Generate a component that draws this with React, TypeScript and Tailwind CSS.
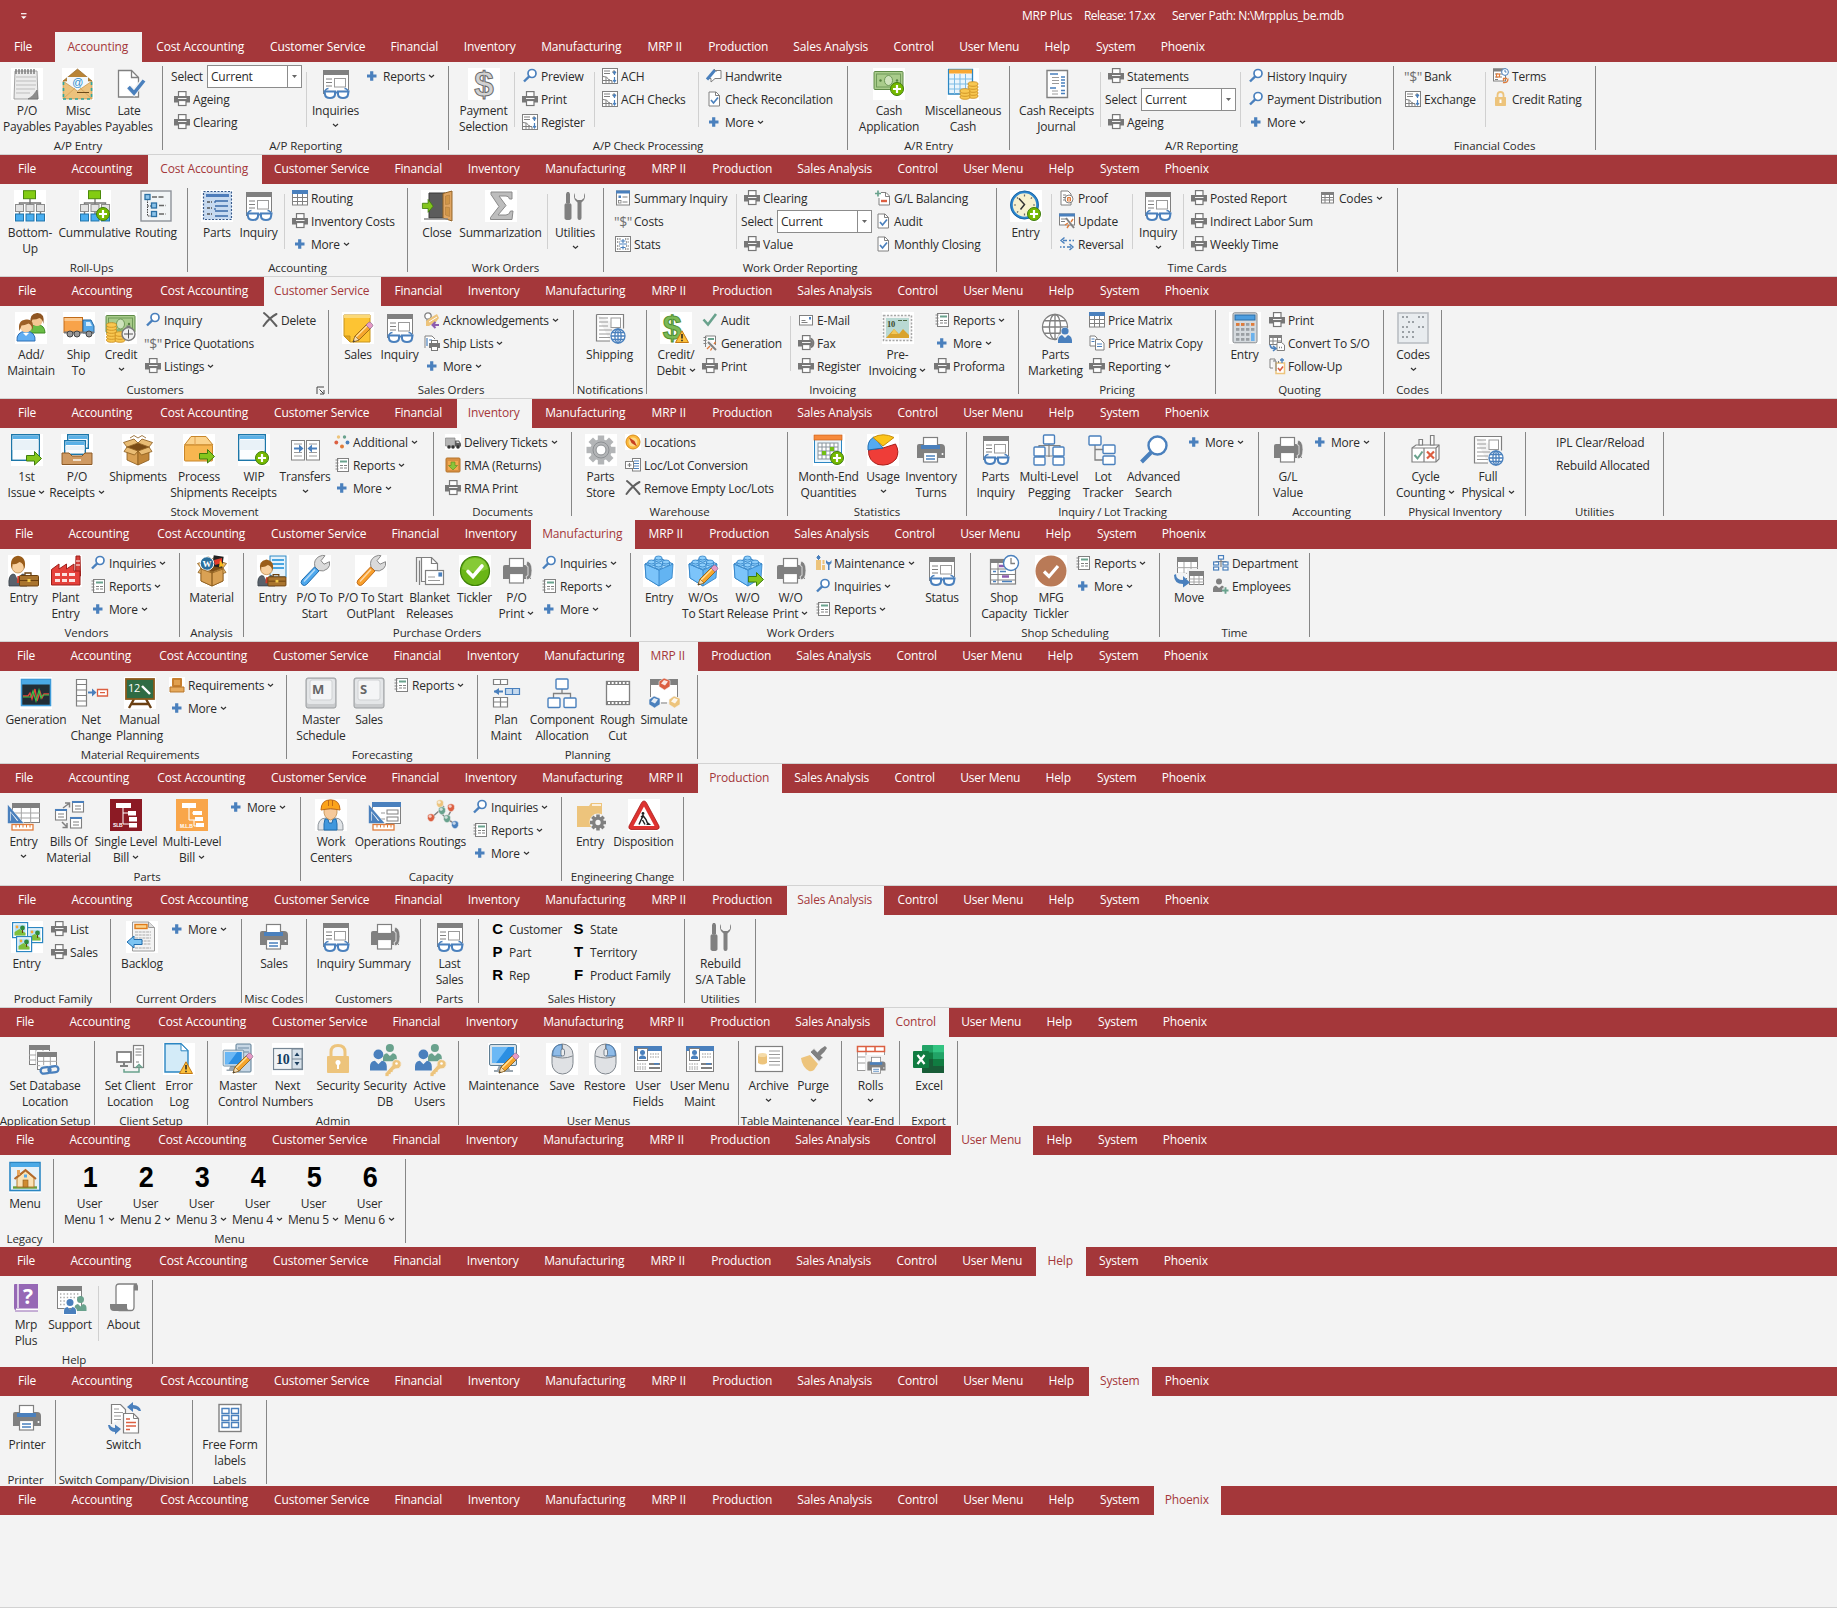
import React from "react";
import type { ReactNode } from "react";

/* ---------- palette used by the drawings ---------- */
const G = "#808080";
const B = "#4a80bd";
const GR = "#69a28d";
const Y = "#edc47c";
const O = "#e07b39";
const R = "#dc5f41";

/* ---------- shared icon parts ---------- */
const Bg = () => <rect width="32" height="32" fill="#fff" />;

const PlusBadge = ({ x, y, r = 7 }: { x: number; y: number; r?: number }) => (
  <g>
    <circle cx={x} cy={y} r={r - 0.5} fill="#76b900" stroke="#3f7d0c" />
    <path d={`M${x - 4} ${y}h8M${x} ${y - 4}v8`} stroke="#fff" strokeWidth="2.2" />
  </g>
);

const ArrowBadge = ({ x, y }: { x: number; y: number }) => (
  <path
    transform={`translate(${x} ${y})`}
    d="M.5 4.5h8v-4l7 7-7 6.500v-4h-8z"
    fill="#84c61c"
    stroke="#3f7d0c"
  />
);

const Pencil = ({ x, y, s = 1 }: { x: number; y: number; s?: number }) => (
  <g transform={`translate(${x} ${y}) scale(${s})`}>
    <path d="M0 20l2-6L14 2l4 4L6 18z" fill="#f6a52c" stroke="#8a5a12" strokeWidth=".8" />
    <path d="M3 15l12-12" stroke="#ffe3a0" strokeWidth="1.300" />
    <path d="M0 20l2-6 4 4z" fill="#f6dcb0" stroke="#7d5a20" strokeWidth=".6" />
    <path d="M0 20l.7-2 1.500 1.400z" fill="#333" />
    <path d="M13 3l2.500-2.500q1-.8 2.200.1l1.800 1.800q.8 1 0 2L17 7z" fill="#e59ac6" stroke="#8a6a8a" strokeWidth=".7" />
  </g>
);

const Warn = ({ x, y }: { x: number; y: number }) => (
  <g transform={`translate(${x} ${y})`}>
    <path d="M7 .8L13.500 12.500H.5z" fill="#fbbf3a" stroke="#c47a14" strokeLinejoin="round" />
    <path d="M7 4v4.500M7 9.800v1.500" stroke="#222" strokeWidth="1.500" />
  </g>
);

const Glasses = ({ x, y }: { x: number; y: number }) => (
  <g transform={`translate(${x} ${y})`} fill="none" stroke={B} strokeWidth="2">
    <path d="M2 5q-.5-4 3.500-4.500M25 5q.5-4-3.500-4.500" strokeWidth="1.600" />
    <path d="M1.500 3.500H12v3q-.5 3.500-5 3.500T2 6.500zM15 3.500h10.500l-.5 3q-.5 3.500-5 3.500t-5-3.500zM12 4.500h3" fill="#fff" />
  </g>
);

const Globe = ({ x, y, r, c = B }: { x: number; y: number; r: number; c?: string }) => (
  <g fill="none" stroke={c} strokeWidth="1.300">
    <circle cx={x} cy={y} r={r} fill="#fff" />
    <ellipse cx={x} cy={y} rx={r * 0.45} ry={r} />
    <path d={`M${x - r} ${y}h${2 * r}M${x - r * 0.87} ${y - r / 2}h${r * 1.74}M${x - r * 0.87} ${y + r / 2}h${r * 1.74}M${x} ${y - r}v${2 * r}`} />
  </g>
);

const Person = ({ x, y, c, s = 1 }: { x: number; y: number; c: string; s?: number }) => (
  <g transform={`translate(${x} ${y}) scale(${s})`} fill={c}>
    <circle cx="6" cy="3.500" r="3.500" />
    <path d="M0 15v-3q0-3.500 3.500-4L6 10.500 8.500 8q3.500.5 3.500 4v3z" />
  </g>
);

const Key = ({ x, y }: { x: number; y: number }) => (
  <g transform={`translate(${x} ${y})`} fill={Y} stroke="#f3f3f3" strokeWidth=".8">
    <path d="M0 14l7-8q-1-4 3-6 4-.5 6 2.500 1 4-2 6.500l-4 .5-2 1.500v2H6v2H4v2H0z" />
    <circle cx="11.500" cy="4" r="1.300" fill="#fff" stroke="none" />
  </g>
);

const Window = ({ x = 0, y = 0, w, h }: { x?: number; y?: number; w: number; h: number }) => (
  <g transform={`translate(${x} ${y})`}>
    <rect x=".7" y=".7" width={w - 1.4} height={h - 1.4} fill="#fbfdff" stroke="#1c76a8" strokeWidth="1.400" />
    <rect x="1.500" y="1.500" width={w - 3} height="3.500" fill="#5ab0e6" />
    <rect x="1.500" y="6" width={w - 3} height={(h - 7) / 2} fill="#e9f2f8" />
  </g>
);

const Carton = () => (
  <g stroke="#8a5a1c" strokeWidth=".8" strokeLinejoin="round">
    <path d="M5 13l11 4v14L5 26z" fill="#d9a154" />
    <path d="M27 13l-11 4v14l11-5z" fill="#c1873a" />
    <path d="M5 13l11-4 11 4-11 4z" fill="#7a4b16" />
    <path d="M5 13L1.500 8.500 12 5l4 4zM27 13l3.500-4.500L20 5l-4 4zM5 13l-3 4.500L12.500 21l3.500-4zM27 13l3 4.500L19.500 21 16 17z" fill="#e9bc74" />
    <path d="M8 4l4-2.500L16 4l4-2.500L24 4" fill="none" />
  </g>
);

const Lego = () => (
  <g stroke="#2d7fc4" strokeWidth=".8" strokeLinejoin="round">
    <path d="M2 9l14-6 14 6-1 14-13 8L3 23z" fill="#63b4f2" />
    <path d="M2 9l14 6v16L3 23z" fill="#7cc4fa" />
    <path d="M2 9l14-6 14 6-14 6z" fill="#a6dafd" />
    <g fill="#8ccdfb">
      <path d="M12 3v3q4 2.500 7 0V3z" /><ellipse cx="15.500" cy="3" rx="3.600" ry="2" />
      <path d="M5 7v3q4 2.500 7 0V7z" /><ellipse cx="8.500" cy="7" rx="3.600" ry="2" />
      <path d="M19.500 7v3q4 2.500 7 0V7z" /><ellipse cx="23" cy="7" rx="3.600" ry="2" />
      <path d="M12 10v3q4 2.500 7 0v-3z" /><ellipse cx="15.500" cy="10" rx="3.600" ry="2" />
    </g>
  </g>
);

const Org = () => (
  <g>
    <path d="M16 9v4M5.500 16v-3h21v3M16 13v4M5.500 21v4M16 21v4M26.500 21v4" stroke="#777" fill="none" strokeWidth="1.400" />
    <rect x="9.500" y=".7" width="12" height="8" fill="#83cc12" stroke="#4b8a0a" />
    <g fill="#e3e3e3" stroke="#8d8d8d">
      <rect x="1.500" y="14.500" width="8" height="7" /><rect x="12" y="14.500" width="8" height="7" /><rect x="22.500" y="14.500" width="8" height="7" />
    </g>
    <g fill="#49aef0" stroke="#2173a8">
      <rect x="1.500" y="24" width="8" height="7" /><rect x="12" y="24" width="8" height="7" /><rect x="22.500" y="24" width="8" height="7" />
    </g>
  </g>
);

const Businessman = () => (
  <g>
    <path d="M1 31q-1-11 4-12l5 2 5-2q5 1 4 12z" fill="#59616b" stroke="#353c44" strokeWidth=".8" />
    <path d="M7 19l3.500 7 3-7z" fill="#fff" /><path d="M9.500 21h2l.7 7h-3.400z" fill="#d23c2a" />
    <circle cx="10" cy="12" r="6" fill="#f7cf9e" stroke="#b5803c" strokeWidth=".7" />
    <path d="M3.500 14Q1 2 10 .7 19 2 16.500 14q-1-6-5-7-4 3-7 2z" fill="#9a5d1a" />
    <path d="M17 20v-2h6v2" fill="none" stroke="#6a3f0e" strokeWidth="1.300" />
    <rect x="11.500" y="20.500" width="19" height="10.500" rx="1" fill="#a9742e" stroke="#6a3f0e" />
    <path d="M12 25.500h18" stroke="#6a3f0e" /><rect x="19.500" y="24" width="3" height="3" fill="#f2c94c" />
  </g>
);

const Wrench = ({ c, d }: { c: string; d: string }) => (
  <g>
    <path d="M16 12q-2-7 4-10.500 4-1.800 6-.8l-4 5 3 3.500 5.500-2.500q1 4-2 7-4 3.500-9 1.800z" fill="#dadada" stroke="#8b8b8b" />
    <path d="M15.500 12l4.500 4L7.500 29.500q-2 2-4.300.2Q1 27.500 3 25z" fill={c} stroke={d} />
    <path d="M16 14.500L5 26.500" stroke="#fff" strokeOpacity=".6" strokeWidth="1.500" />
  </g>
);

const Monitor = () => (
  <g>
    <path d="M11 22h9l2 5h3v2H6v-2h3z" fill="#9aa6b0" />
    <rect x="1.500" y="1.500" width="27" height="21" rx="1.500" fill="#d6e2ea" stroke="#5d7d93" />
    <rect x="4" y="4" width="22" height="16" fill="#2b8fe3" />
    <path d="M4 4h16L8 20H4z" fill="#6bb8f5" />
  </g>
);

const Mouse = ({ right }: { right?: boolean }) => (
  <g>
    <rect x="6" y="1" width="21" height="30" rx="10.500" fill="#dfe1e4" stroke="#7f868d" />
    {right ? (
      <path d="M17 1.500q9.500 0 9.500 11.500h-9.500z" fill="#8ebbe8" stroke="#4b79a8" />
    ) : (
      <path d="M16 1.500Q6.500 1.500 6.500 13H16z" fill="#8ebbe8" stroke="#4b79a8" />
    )}
    <path d="M6.500 13q10 4 20 0M16.500 1v12" stroke="#7f868d" fill="none" />
    <rect x="15" y="6" width="3.500" height="7" rx="1.700" fill="#eceef0" stroke="#5d6a77" strokeWidth=".8" />
  </g>
);

const News = () => (
  <g>
    <path d="M2.500 2.500h27v14M16 29H2.500V2.500" fill="#fff" stroke={G} strokeWidth="1.200" />
    <path d="M5 6h9M5 10h9M5 14h9M5 18h13M5 22h11M5 25.500h11" stroke="#9a9a9a" />
    <rect x="17" y="6" width="9.500" height="9.500" fill="#fff" stroke="#9a9a9a" />
    <Globe x={24} y={24} r={7} />
  </g>
);

const GreySheet = ({ x, y, w, h, c = G }: { x: number; y: number; w: number; h: number; c?: string }) => (
  <g transform={`translate(${x} ${y})`}>
    <rect x=".5" y=".5" width={w - 1} height={h - 1} fill="#fff" stroke={c} />
    <rect width={w} height="5" fill={c} />
    <path
      d={`M${w / 3} 5v${h - 5}M${(w * 2) / 3} 5v${h - 5}M0 ${5 + (h - 5) / 3}h${w}M0 ${5 + ((h - 5) * 2) / 3}h${w}`}
      stroke="#a5a5a5"
    />
  </g>
);

const Key3D = ({ t }: { t: string }) => (
  <g>
    <rect x="1" y="1" width="30" height="30" rx="2" fill="#c9cbcd" stroke="#9a9da0" />
    <rect x="2" y="2" width="28" height="25" rx="2" fill="#e4e6e8" />
    <rect x="5" y="3" width="22" height="20" rx="2" fill="#f4f5f6" stroke="#d0d2d4" />
    <text x="7" y="17" fontSize="13" fontWeight="700" fontFamily="Open Sans, sans-serif" fill="#666">{t}</text>
  </g>
);

const Tools = () => (
  <g fill={G}>
    <path d="M8 2h2l1 2v9H7V4zM5.500 15q0-2 3.500-2t3.500 2v13q0 2-3.500 2t-3.500-2z" />
    <path d="M16 3q-2 3 0 7l2.500 2.500V28q0 2 2 2t2-2V12.500L25 10q2-4 0-7v5l-2.500 2h-4L16 8z" />
  </g>
);

const Printer32 = ({ phone }: { phone?: boolean }) => (
  <g>
    <path d="M2 12q0-2 2-2h22q4 0 4 4v10H2z" fill={G} />
    <rect x="8.500" y="3.500" width="14" height="9" fill="#fff" stroke={G} strokeWidth="1.200" />
    {!phone && <rect x="6" y="11" width="19" height="4" fill={B} />}
    {phone && <path d="M26 6q5 1 5 9.500T26 25l-1-3.500 2-1v-9l-2-1z" fill={G} stroke="#f3f3f3" strokeWidth=".8" />}
    <rect x="8.500" y="18.500" width="14" height="9.500" fill="#fff" stroke={G} strokeWidth="1.200" />
    {!phone && <path d="M11 22h9M11 25h9" stroke={B} strokeWidth="1.300" />}
    {!phone && <circle cx="27.500" cy="20" r="1" fill="#fff" />}
  </g>
);

const Profile = () => (
  <g>
    <rect x="2.500" y="3.500" width="27" height="25" fill="#fff" stroke={G} />
    <rect x="2" y="3" width="28" height="5" fill={B} />
    <rect x="5.500" y="5.500" width="10" height="12" fill="#fff" stroke={G} />
    <circle cx="10.500" cy="9.500" r="2.500" fill={B} /><path d="M7 16v-2q3.500-3.500 7 0v2z" fill={B} />
    <path d="M18 11h10M18 14h10M5 21h9M5 24h9M5 26h9" stroke="#999" strokeDasharray="1.500 1" />
    <rect x="17" y="20" width="11" height="2" fill={G} /><rect x="17" y="24" width="11" height="2" fill={G} /><rect x="22" y="20" width="5" height="1.500" fill={B} />
  </g>
);

const Gear = ({ x, y, r, c, hole }: { x: number; y: number; r: number; c: string; hole: string }) => (
  <g transform={`translate(${x} ${y})`}>
    {[0, 45, 90, 135].map((a) => (
      <rect key={a} x={-r * 0.22} y={-r} width={r * 0.44} height={2 * r} fill={c} transform={`rotate(${a})`} />
    ))}
    <circle r={r * 0.74} fill={c} />
    <circle r={r * 0.33} fill={hole} />
  </g>
);

const Ruler = ({ children }: { children?: ReactNode }) => (
  <g>
    {children}
    <path d="M0 8v17h15z" fill="#fff" stroke="#f3f3f3" strokeWidth="3" />
    <path d="M1 9v14h12zM4 17v4h3z" fill="#fff" stroke={B} strokeWidth="2.400" />
    <rect x="4" y="25.500" width="21" height="5.500" fill="#fff" stroke={O} strokeWidth="1.300" />
    <path d="M8 26v2.500M11.500 26v2.500M15 26v2.500M18.500 26v2.500M22 26v2.500" stroke={O} />
  </g>
);

const Form = () => (
  <g>
    <path d="M3.500 6v20M28.500 6v16" stroke={G} />
    <rect x="4" y="7" width="24" height="15" fill="#fff" />
    <rect x="3" y="2" width="26" height="5" fill={G} />
    <path d="M6 11h6M6 14.500h6M6 18h6" stroke={G} />
    <rect x="14.500" y="10.500" width="11" height="8.500" fill="#fff" stroke="#9a9a9a" />
  </g>
);

const Node = ({ x, y, w = 11, h = 9 }: { x: number; y: number; w?: number; h?: number }) => (
  <rect x={x} y={y} width={w} height={h} rx="1" fill="#fff" stroke={B} strokeWidth="1.400" />
);

const Dollar = ({ x, y, s, c, k, w = 1 }: { x: number; y: number; s: number; c: string; k: string; w?: number }) => (
  <text x={x} y={y} fontSize={s} textAnchor="middle" fontWeight="700" fontFamily="Liberation Sans, sans-serif" fill={c} stroke={k} strokeWidth={w}>$</text>
);

const Banknote = ({ w = 30, h = 18 }: { w?: number; h?: number }) => (
  <g>
    <rect x="1" y="3.500" width={w} height={h} rx="1" fill="#a9cc8b" stroke="#5e8a47" />
    <rect x="3.500" y="6" width={w - 5} height={h - 5} fill="none" stroke="#6f9a58" />
    <ellipse cx={w / 2 + 1} cy={3.5 + h / 2} rx="4" ry="5" fill="#cfe3bd" stroke="#6f9a58" />
    <circle cx="7.500" cy={3.5 + h / 2} r="1.200" fill="#55803f" /><circle cx={w - 5} cy={3.5 + h / 2} r="1.200" fill="#55803f" />
  </g>
);

const Coins = ({ x, y, n }: { x: number; y: number; n: number }) => (
  <g fill="#f8c750" stroke="#c98a1c" strokeWidth=".8">
    {Array.from({ length: n }, (_, i) => (
      <ellipse key={i} cx={x} cy={y - i * 3} rx="5" ry="2.300" />
    ))}
  </g>
);

/* ---------- 32 px icons ---------- */
const big: Record<string, ReactNode> = {
  notepad: (<><Bg /><path d="M4 3h22l1 28H3z" fill="#ececec" stroke="#a2a2a2" /><path d="M5 9h20M5 13h20M5 17h20M5 21h19M5 25h14" stroke="#bdbdbd" /><path d="M17 31q5-2 9-9l1 9z" fill="#8d8d8d" stroke="#666" strokeWidth=".6" /><path d="M5 1v5M8 1v5M11 1v5M14 1v5M17 1v5M20 1v5M23 1v5" stroke="#777" strokeWidth="1.400" /></>),
  envelope: (<><Bg /><path d="M1 13L15.500 1 30 13z" fill="#b98436" stroke="#8d5f1e" strokeWidth=".6" /><path d="M5 9h21v14H5z" fill="#f4f8fb" /><text x="15.500" y="18" fontSize="11" textAnchor="middle" fontFamily="Liberation Sans, sans-serif" fontStyle="italic" fill="#2b8ccc">@</text><path d="M1 13l14.500 10L30 13v18H1z" fill="#ecc27c" stroke="#b98436" strokeWidth=".6" /><path d="M1 31l12-11M30 31L18 20" stroke="#d9a860" /><path d="M15 24.500h12" stroke="#6a4a1a" /><path d="M1 31h29M1.500 14v17M29.500 14v17" stroke="#2fa7a0" strokeWidth="1.600" strokeDasharray="3 3" /></>),
  docCheck: (<><path d="M5.500 2.500h13l7 7v19.500h-20z" fill="#fff" stroke={G} strokeWidth="1.300" /><path d="M18.500 2.500v7h7" fill="none" stroke={G} strokeWidth="1.300" /><path d="M16 19l5 5.500L31 12" fill="none" stroke="#f3f3f3" strokeWidth="6" /><path d="M15.500 19l5.500 6L31 12.500" fill="none" stroke={B} strokeWidth="3.600" /></>),
  inquiry: (<><Form /><Glasses x={3} y={20} /></>),
  dollar: (<><Bg /><Dollar x={16} y={28} s={35} c="#d2d2d2" k="#6a6a6a" w={1} /></>),
  cashPlus: (<><Bg /><Banknote w={29} /><PlusBadge x={24} y={21} /></>),
  tableCoins: (<><Bg /><path d="M1.500 1.500h24v21l-4 3.500h-20z" fill="#eaf5fc" stroke="#2b86c2" strokeWidth="1.300" /><rect x="2" y="1.500" width="23" height="4" fill="#f9a833" /><path d="M2 11h23M2 16h23M2 21h21M7.500 6v20M13 6v20M18.500 6v20" stroke="#7cbbe4" /><Coins x={26} y={28} n={5} /><Coins x={18} y={29} n={3} /></>),
  journal: (<><path d="M6 2.500h20.500V29.500H6z" fill="#fff" stroke={G} strokeWidth="1.400" /><path d="M9 6h8M9 20h6" stroke={B} strokeWidth="1.300" /><path d="M11 9.500h7M11 12.500h7M11 15.500h7M11 23h6M11 26h6" stroke="#9a9a9a" /><path d="M20 9h4M20 12h4M20 15h4M20 18h4M20 22.500h4M20 25.500h4" stroke={B} strokeWidth="1.300" /></>),
  org: (<><Bg /><Org /></>),
  orgPlus: (<><Bg /><Org /><PlusBadge x={24} y={24} /></>),
  routing: (<><rect x="1" y="1" width="30" height="30" fill="#f1f4f6" stroke="#8d9299" strokeWidth="1.400" /><path d="M7.500 9v17H13M7.500 16H13" fill="none" stroke="#444" strokeDasharray="1.500 1" /><g fill="#8cc3ea" stroke="#2b70a4" strokeWidth="1.300"><rect x="5" y="4.500" width="5" height="5" /><rect x="11.500" y="13" width="5" height="5" /><rect x="11.500" y="21.500" width="5" height="5" /></g><path d="M12 7h12M19 15.500h7M19 24h7" stroke="#666" strokeWidth="1.300" strokeDasharray="5 1.500" /></>),
  parts: (<><Bg /><rect x="2.500" y="1.500" width="28" height="28" fill="#c7daf0" stroke="#35588a" strokeWidth="1.200" strokeDasharray="2 1.500" /><rect x="5" y="4" width="23" height="3" fill="#4d7cba" /><path d="M6 12h5M6 18h5M6 24h5" stroke="#555" strokeWidth="1.300" strokeDasharray="3 1" /><path d="M14 11h13M14 11v2M14 16h13M14 18v2M14 21h13M14 26h13" stroke="#3a6ba9" strokeWidth="1.300" /></>),
  door: (<><Bg /><path d="M8 3h16v25H8z" fill="#5c5c5c" stroke="#3a3a3a" /><path d="M22 3.500L31 1v30l-9-3z" fill="#dfa562" stroke="#8f6024" /><path d="M24.500 6l4-1v9l-4 .5zM24.500 17l4 .5v9l-4-1.500z" fill="#d09548" stroke="#b07c3a" strokeWidth=".6" /><path d="M3 29h24" stroke="#888" strokeWidth="1.500" /><g transform="translate(1 9) scale(.72 .95)"><ArrowBadge x={0} y={0} /></g></>),
  sigma: (<><Bg /><path d="M6 2h21v7h-2.500q-.5-3-3.500-3H14l7 9.500-8 9.500h8q3.500 0 4.500-4H28l-1 8.500H5.500v-2l8.500-11L6 4.500z" fill="#bdbdbd" stroke="#8a8a8a" /></>),
  tools: <Tools />,
  clockPlus: (<><Bg /><circle cx="14.500" cy="15" r="13" fill="#f7f1cf" stroke="#2b86cf" strokeWidth="2.600" /><circle cx="14.500" cy="15" r="14" fill="none" stroke="#1c5f99" strokeWidth=".8" /><path d="M14.500 4.500v2M14.500 23.500v2M4 15h2M23 15h2M7 7.500l1.200 1.200M22 7.500l-1.200 1.200M7 22.500l1.200-1.200" stroke="#666" strokeWidth="1.200" /><path d="M9 8.500l5.500 6-4 5" fill="none" stroke="#333" strokeWidth="1.500" /><PlusBadge x={24} y={24} /></>),
  people: (<><Bg /><path d="M14 21q0-8 8-8.500 8 .5 8 8.500z" fill="#69bd45" stroke="#3f8a22" /><circle cx="22" cy="8.500" r="5.500" fill="#f4c792" /><path d="M15.500 12Q14 1.500 22 1t6.500 11q-1-5-4-6-4 2-7 1.500z" fill="#8f5521" /><path d="M2 29q-1-9 9-10 10 1 9 10z" fill="#61aef2" stroke="#2d6fb5" /><circle cx="11" cy="14.500" r="6" fill="#f8cf9f" /><path d="M4.500 19Q2 8.500 11 7.500T17.500 19q0-6-4-7.500-4 2-7 2z" fill="#9c5f26" /><path d="M8 21l3 3 3-3z" fill="#fff" /></>),
  truck: (<><Bg /><rect x="1" y="5.500" width="18.500" height="15" fill="#f8a34a" stroke="#c06a18" /><path d="M1.500 6h17.500v3H1.500z" fill="#fbc88e" /><path d="M20 8h8l3 6v7H20z" fill="#58a9e8" stroke="#24679f" /><path d="M23 10h4l2 4h-6z" fill="#d6ecfb" /><rect x="1" y="19.500" width="30" height="2" fill="#777" /><circle cx="7" cy="22" r="3" fill="#9a9a9a" stroke="#444" /><circle cx="14" cy="22" r="3" fill="#9a9a9a" stroke="#444" /><circle cx="26" cy="22" r="3" fill="#9a9a9a" stroke="#444" /></>),
  credit: (<><Bg /><Banknote w={29} h={17} /><Coins x={6.5} y={28} n={6} /><Coins x={15} y={28} n={3} /><circle cx="23.500" cy="22" r="6.500" fill="#f1f1f1" stroke="#7a7a7a" strokeWidth="1.400" /><path d="M23.500 17.500v9M19 22h9" stroke="#555" /><path d="M21.500 14.500h4" stroke="#7a7a7a" strokeWidth="2" /></>),
  note: (<><Bg /><path d="M2 3h26v27H8l-6-6z" fill="#fdc433" stroke="#c8941a" /><path d="M2 3h26v3H2z" fill="#fbd978" /><path d="M8 30v-6H2z" fill="#e4a51d" stroke="#c8941a" /><Pencil x={11} y={10} /></>),
  news: <News />,
  dollarWarn: (<><Bg /><Dollar x={12} y={27} s={34} c="#7cb956" k="#4f8f30" w={1} /><Warn x={15} y={18} /></>),
  stamp: (<><Bg /><rect x="1.500" y="3.500" width="28" height="25" fill="#f4f4f4" stroke="#a7a7a7" strokeWidth="1.500" strokeDasharray="2 1.500" /><rect x="4" y="6" width="23" height="20" fill="#b9d9d3" /><path d="M4 26l8-9 5 5 4-5 6 6v3z" fill="#d9a32c" /><path d="M12 17l4 5h-7z" fill="#f2c85a" /><text x="5" y="14.500" fontSize="8.500" fontWeight="700" fontFamily="Liberation Serif, serif" fill="#3c4a2c">10</text><path d="M16 8.500h9" stroke="#4d6a45" strokeDasharray="4 1" /></>),
  globePerson: (<><Globe x={15} y={15} r={12.5} c={G} /><path d="M17 30q0-7 4-8.500 0-6 4-6.500 5 1 4 6.500 3 1.500 3 8.500z" fill="#f3f3f3" /><circle cx="25" cy="19" r="3.600" fill={B} /><path d="M18 31q-.5-7 4-8l3 3 3-3q4.500 1 4 8z" fill={B} /></>),
  calculator: (<><Bg /><rect x="4" y=".8" width="24" height="30" rx="1.500" fill="#d5dade" stroke="#85898d" /><rect x="6" y="3" width="20" height="5" fill="#4c9ddf" stroke="#2a6ca6" /><g fill="#9a9fa3">{[11, 16, 21, 26].map((y) => [7, 12, 17].map((x) => <rect key={`${x}-${y}`} x={x} y={y} width="3.400" height="2.800" />))}</g><rect x="12" y="11" width="3.400" height="2.800" fill={O} /><rect x="22" y="11" width="3.400" height="2.800" fill={O} /><rect x="7" y="11" width="3.400" height="2.800" fill={O} /><rect x="22" y="16" width="3.400" height="2.800" fill="#9a9fa3" /><rect x="22" y="21" width="3.600" height="8" fill="#6cb2ec" /></>),
  codes: (<><rect x="1" y="1" width="30" height="30" fill="#e8ecef" stroke="#b9bec3" strokeWidth="1.600" />{[[5, 4], [9, 4], [21, 4], [25, 4], [11, 9], [15, 9], [5, 14], [9, 14], [21, 14], [25, 14], [5, 19], [11, 19], [15, 19], [5, 24], [9, 24], [15, 24]].map(([x, y], i) => <rect key={i} x={x} y={y} width="2" height="2" fill="#9aa0a5" />)}</>),
  winArrow: (<><Bg /><Window w={29} h={27} /><ArrowBadge x={15} y={17} /></>),
  tray: (<><Bg /><Window x={6} y={0} w={22} h={15} /><Window x={3} y={6} w={22} h={15} /><path d="M1 19h7l3 3h10l3-3h7v11.500H1z" fill="#cf9a62" stroke="#8c5a26" /><path d="M12 26h8" stroke="#f0e0cc" strokeWidth="2" /></>),
  carton: (<><Bg /><Carton /></>),
  boxArrow: (<><Bg /><path d="M1.500 11L8 2.500h15l7 8.500z" fill="#fbd38c" stroke="#c8862a" /><rect x="1.500" y="11" width="28" height="16" rx="1" fill="#f7b650" stroke="#c8862a" /><path d="M12 3v8" stroke="#e0a050" /><ArrowBadge x={16} y={15} /></>),
  winPlus: (<><Bg /><Window w={28} h={27} /><PlusBadge x={24} y={24} /></>),
  transfers: (<g><rect x="2.500" y="6.500" width="13" height="19.500" fill="#fff" stroke={G} /><rect x="17.500" y="6.500" width="13" height="19.500" fill="#fff" stroke={G} /><path d="M5 10h8M20 10h8M5 18.500h8M20 18.500h8M5 22h8M20 22h8" stroke="#9a9a9a" /><path d="M5 14.500h8M28 14.500h-8" stroke={B} strokeWidth="1.800" /><path d="M10 10.500l4.500 4-4.500 4zM23 10.500l-4.500 4 4.500 4z" fill={B} /></g>),
  gear: (<><Bg /><Gear x={16} y={16} r={14.5} c="#b3b5b7" hole="#fff" /><circle cx="16" cy="16" r="8" fill="none" stroke="#8e9194" /><circle cx="16" cy="16" r="5" fill="none" stroke="#8e9194" /></>),
  calPlus: (<><Bg /><rect x="1.500" y="1.500" width="27" height="27" fill="#eaf5fc" stroke="#2b86c2" /><rect x="1" y="1" width="28" height="5" fill="#f78a3c" stroke="#c8601c" strokeWidth=".7" /><rect x="5" y="9" width="20" height="16" fill="#fff" stroke="#88939c" /><path d="M5 13h20M5 17h20M5 21h20M9 9v16M13 9v16M17 9v16M21 9v16" stroke="#88939c" /><rect x="17" y="13" width="4" height="4" fill="#72bf14" /><rect x="9" y="17" width="4" height="4" fill="#72bf14" /><PlusBadge x={24} y={24} /></>),
  pie: (<><Bg /><path d="M16 14L1.500 16Q1 27 11 30.500 22 33 29 25q4-7-.5-15z" fill="#ef3d38" stroke="#a81c17" /><path d="M16 14L1 16V12Q1.500 6 7 3z" fill="#55aaf0" stroke="#1f6cae" /><path d="M16 12L6 3.500Q16-2 27 3.500z" fill="#fcc419" stroke="#c78d0a" /></>),
  printer: <Printer32 />,
  printerPhone: <Printer32 phone />,
  multi: (<><path d="M16 10v13M6 13v-1.500h21V13M6 24v-2h21v2" fill="none" stroke={G} strokeWidth="1.200" /><Node x={10.500} y={1} /><Node x={1} y={13} /><Node x={20} y={13} /><Node x={1} y={23} h={8} /><Node x={20} y={23} h={8} /></>),
  lot: (<><path d="M8 11v15h8M8 15.500h8" fill="none" stroke={G} strokeWidth="1.300" /><Node x={2} y={2} w={12} /><Node x={16} y={11} w={12} h={8.5} /><Node x={16} y={22} w={12} h={8.5} /></>),
  search: (<><circle cx="19.500" cy="11.500" r="9" fill="#fff" stroke={B} strokeWidth="2.400" /><path d="M13 18.500L3.500 28" stroke={B} strokeWidth="4" /></>),
  cycle: (<g fill="#fff" stroke={G} strokeWidth="1.200"><path d="M2 14l4-3h23v14l-3 3H2z" /><path d="M2 14h24v14M14 14v14M26 14l3-3" fill="none" /><path d="M9 11V5.500h3.500V11zM20.500 11V1.500H24V11z" /><path d="M4.500 21l3 3.500 5-7" fill="none" stroke={GR} strokeWidth="2" /><path d="M17 17.500l7 7M24 17.500l-7 7" stroke={R} strokeWidth="2.200" /></g>),
  biz: (<><Bg /><Businessman /></>),
  factory: (<><Bg /><path d="M26 1h4l.5 20h-5z" fill="#d8403a" stroke="#9c1f1a" /><path d="M1.500 30V14.500L9 9v5l7.500-5v5L24 9v7h6v14z" fill="#e5413b" stroke="#9c1f1a" /><g fill="#fbe3e1"><rect x="5" y="18" width="5" height="3" /><rect x="12" y="18" width="5" height="3" /><rect x="19" y="18" width="6" height="3" /><rect x="5" y="24" width="5" height="3" /><rect x="12" y="24" width="5" height="3" /><rect x="19" y="24" width="6" height="3" /></g><path d="M26 6h4M26 10h4" stroke="#fff" /></>),
  material: (<><Bg /><Carton /><rect x="17" y="1" width="10" height="11" fill="#222" transform="rotate(8 22 6)" /><path d="M18 5l8-2v5l-7 2z" fill="#e33b2c" /><path d="M24 5l4 6-5 1z" fill="#fbbc1c" /><circle cx="11" cy="8.500" r="6.800" fill="#2a6f9c" stroke="#fff" /><text x="11" y="12" fontSize="9" fontWeight="700" textAnchor="middle" fontFamily="Liberation Serif, serif" fill="#fff">W</text><path d="M5 14l11 4v13L5 26zM27 14l-11 4v13l11-5z" fill="#d9a154" stroke="#8a5a1c" strokeWidth=".8" /></>),
  bizDoc: (<><Bg /><rect x="13" y="1" width="16" height="21" fill="#e6f3fb" stroke="#2b86c2" /><path d="M15 5h12M15 9h12M15 13h12" stroke="#49a6e2" strokeWidth="2" /><g transform="translate(0 4) scale(.95 .87)"><Businessman /></g></>),
  wrenchBlue: (<><Bg /><Wrench c="#4fa9ee" d="#1f6cae" /></>),
  wrenchOrange: (<><Bg /><Wrench c="#f9a02c" d="#c06a18" /></>),
  blanket: (<g fill="#fff" stroke={G} strokeWidth="1.200"><path d="M2.500 27V2.500H14M5.500 30V5.500" fill="none" /><path d="M8.500 28.500v-24h10l6 6v18z" transform="translate(-1 -2)" /><path d="M17.500 2.500v6h6" fill="none" /><rect x="11.500" y="15.500" width="18" height="14" /><path d="M14 22h7M14 25.500h12" stroke="#9a9a9a" /><rect x="25" y="18" width="2.500" height="3" fill={B} stroke={B} /></g>),
  tickler: (<><Bg /><circle cx="16" cy="16" r="14.500" fill="#6ab616" stroke="#3e8008" strokeWidth="1.200" /><path d="M3 14q2-11 13-11t13 11q-13 6-26 0z" fill="#9ad74c" opacity=".6" /><path d="M9 16.500l5 5L23 11" fill="none" stroke="#fff" strokeWidth="3.600" strokeLinecap="round" /></>),
  mfg: (<><Bg /><circle cx="16" cy="16" r="15.500" fill="#b97a57" /><path d="M9 16.500l5 5L23 11" fill="none" stroke="#fff" strokeWidth="3.200" /></>),
  lego: (<><Bg /><Lego /></>),
  legoPencil: (<><Bg /><Lego /><Pencil x={11} y={10} /></>),
  legoArrow: (<><Bg /><Lego /><ArrowBadge x={16} y={17} /></>),
  capacity: (<g><rect x="2.500" y="4.500" width="25" height="24.500" fill="#fff" stroke={G} strokeWidth="1.200" /><rect x="2" y="4" width="20" height="4" fill={G} /><path d="M10 8v21M3 14h24M3 19.500h24M3 25h24" stroke={G} /><path d="M11 11h7M14 21.500h7" stroke="#8d5cb0" strokeWidth="2.600" /><path d="M12 16.500h6M5 16.500h3M14 26.500h10M5 26.500h3" stroke={B} strokeWidth="1.500" /><circle cx="23" cy="8" r="7.500" fill="#fff" stroke={B} strokeWidth="1.400" /><path d="M23 3v5.500h4" fill="none" stroke={G} strokeWidth="1.300" /></g>),
  move: (<><GreySheet x={4} y={2} w={21} h={22} /><rect x="14" y="14" width="18" height="18" fill="#f3f3f3" /><GreySheet x={16} y={16} w={15} h={14} /><path d="M13 18v14H0V18z" fill="#f3f3f3" /><path d="M3 19q0 6 7 6v-4l7 6.500-7 5v-3.500Q1 29 1 20z" fill={B} /></>),
  generation: (<><Bg /><rect x="1.500" y="2.500" width="29" height="26" fill="#222e36" stroke="#3f9bd8" strokeWidth="1.600" /><rect x="2" y="3" width="28" height="4.500" fill="#4aa9e6" /><path d="M3 19h5l2-3 2 6 3-10 2 12 3-9 2 6 2-4h5" fill="none" stroke="#e0443a" strokeWidth="1.400" /><path d="M3 20h8l2-6 3 10 3-11 2 8 2-3h6" fill="none" stroke="#38c24a" strokeWidth="1.200" /></>),
  netChange: (<g><path d="M1.500 2.500h10V29h-10zM1.500 7.500h10M1.500 13h10M1.500 18.500h10M1.500 24h10" fill="#fff" stroke={G} strokeWidth="1.200" /><path d="M13 15.500h6" stroke={B} strokeWidth="2" /><path d="M17 11.500l4.500 4-4.500 4z" fill={B} /><path d="M22.500 12.500h10v6.500h-10zM25 15.700h5" fill="#fff" stroke={R} strokeWidth="1.300" /></g>),
  board: (<><Bg /><path d="M10 22L5 31M22 22l5 9M7 27h18" stroke="#6b3f12" strokeWidth="2.400" /><rect x="2" y="2" width="28" height="20" fill="#2f6b44" stroke="#8a5a1c" strokeWidth="1.800" /><text x="4" y="15" fontSize="11" fontFamily="Open Sans, sans-serif" fill="#fff">12</text><path d="M18 9l8 8" stroke="#fff" strokeWidth="2.400" /></>),
  keyM: <Key3D t="M" />,
  keyS: <Key3D t="S" />,
  plan: (<g fill="#fff" stroke={G} strokeWidth="1.200"><path d="M3.500 2.500h14v5h-14zM10.500 2.500v5" /><path d="M15.500 11.500h14v6h-14zM22.500 11.500v6" fill="#c5d9ee" stroke={B} /><path d="M4 14.500h9" stroke={B} strokeWidth="2" /><path d="M9 11l-5 3.500L9 18z" fill={B} stroke="none" /><path d="M3.500 20.500h14v9.500h-14zM10.500 20.500V30M3.500 25h14" /></g>),
  component: (<><path d="M16 12v5M7.500 21v-4.500h17V21" fill="none" stroke={G} strokeWidth="1.300" /><Node x={10} y={2} w={12} h={10} /><Node x={2} y={21} w={12} h={9.5} /><Node x={18} y={21} w={12} h={9.5} /></>),
  film: (<g><rect x="4.500" y="4.500" width="23" height="23" fill="#fff" stroke={G} strokeWidth="1.300" /><path d="M4 6h24M4 26h24" stroke={G} strokeWidth="4" /><path d="M6 6h21M6 26h21" stroke="#fff" strokeWidth="2" strokeDasharray="2 1.700" /></g>),
  simulate: (<g><rect x="2" y="2" width="28" height="7" fill={G} /><path d="M2.500 8v12M29.500 8v12M13 26h6" stroke={G} /><rect x="3" y="8" width="26" height="17" fill="#fff" />{([[10, 0, R], [0, 18, B], [20, 18, Y]] as [number, number, string][]).map(([x, y, c]) => <g key={c} transform={`translate(${x} ${y})`}><path d="M6 1l6 2.500v6L6.500 13 1 9.500v-5z" fill={c} stroke="#f3f3f3" strokeWidth=".6" /><path d="M3 6.500L6 3l4 1.500-3 4z" fill="#fff" opacity=".85" /></g>)}</g>),
  partEntry: (<Ruler><GreySheet x={4} y={4} w={28} h={20} /></Ruler>),
  bom: (<g fill="#fff" stroke={G} strokeWidth="1.100">{[[19, 2], [2, 10], [17, 18]].map(([x, y]) => <g key={x}><rect x={x + .5} y={y + .5} width="11" height="10.500" /><path d={`M${x} ${y + 1}h12`} stroke={B} strokeWidth="2" /><path d={`M${x + 3} ${y + 5}h6M${x + 3} ${y + 8}h6`} /></g>)}<path d="M10 9l6-4.500M12 4h4.500v4.500M9 23l5 5M9.500 28.500H14V24" fill="none" strokeWidth="1.500" /></g>),
  slb: (<><rect width="32" height="32" fill="#8c1a24" /><rect x="6" y="4" width="15" height="5" fill="#fff" /><path d="M13 9v16h7M13 14h5" fill="none" stroke="#fff" /><g fill="#fff"><rect x="18" y="12" width="8" height="4.500" /><rect x="19" y="18" width="8" height="4.500" /><rect x="19" y="24" width="8" height="4.500" /></g><text x="3" y="28" fontSize="5" fontWeight="700" fontFamily="Liberation Sans, sans-serif" fill="#fff">SLB</text></>),
  mlb: (<><rect width="32" height="32" fill="#f9a64a" /><rect x="6" y="4" width="14" height="5" fill="#fff" /><path d="M13 9v12h6M16 14h4M18 21v6h4" fill="none" stroke="#fff" /><g fill="#fff"><rect x="17" y="12" width="9" height="4" /><rect x="19" y="18" width="8" height="4" /><rect x="20" y="24" width="8" height="4" /></g><text x="4" y="29" fontSize="5" fontWeight="700" fontFamily="Liberation Sans, sans-serif" fill="#fff">M.L.B</text></>),
  worker: (<><Bg /><path d="M3 31q-1-12 8-12h9q9 0 8 12z" fill="#e2e5e8" stroke="#8f969c" /><path d="M9 31v-6l1-5h3l1 4h3l1-4h3l1 5v6z" fill="#3f97dd" stroke="#1f6cae" /><path d="M9 10q-1 9 6.500 11 7.500-2 6.500-11z" fill="#f6c99a" stroke="#b5803c" strokeWidth=".7" /><path d="M6 11Q6 1 15.500.8 25 1 25 11q-9.500-3-19 0z" fill="#fba31b" stroke="#c06a18" /><path d="M13.500 1v6M17.500 1v6" stroke="#c06a18" /></>),
  operations: (<Ruler><rect x="3.500" y="3.500" width="28" height="21" fill="#fff" stroke={G} /><rect x="3" y="3" width="29" height="5" fill={B} /><path d="M12 14h4M12 20h4" stroke="#999" /><rect x="18" y="11" width="11" height="4" fill="#fff" stroke={G} /><rect x="18" y="18" width="11" height="4" fill="#fff" stroke={G} /></Ruler>),
  routings: (<g><path d="M3 20l9-8 8 8 8 5M12 12l5-5M20 19l5-9M8 18l-5 2" stroke={G} strokeWidth="1.500" fill="none" /><g stroke="#f3f3f3" strokeWidth=".6">{([[13, 5, Y], [24, 9, R], [4, 19, R], [15, 12, GR], [20, 20, GR], [28, 26, B]] as [number, number, string][]).map(([x, y, c], i) => <g key={i} transform={`translate(${x} ${y}) scale(.85)`}><path d="M-4-2q0-3 4-3t4 3v3q-1 3-4 3.500-3-.5-4-3.500z" fill={c} /><circle cx="-1" cy="-2" r="1.600" fill="#fff" opacity=".7" /></g>)}</g></g>),
  folderGear: (<><path d="M3 7h12l2-3h11v24H3z" fill={Y} /><path d="M18 6h9" stroke="#fff" strokeWidth="1.500" /><circle cx="24" cy="23" r="8.500" fill="#f3f3f3" /><Gear x={24} y={23.500} r={8} c={G} hole="#f3f3f3" /></>),
  roadwork: (<><Bg /><path d="M16 2q1.500 0 2.300 1.500L31 27q1 3-2 3.500H3q-3-.5-2-3.500L13.700 3.500Q14.500 2 16 2z" fill="#dd3330" stroke="#a81c1a" strokeWidth=".8" /><path d="M16 7.500l10.500 19.500H5.500z" fill="#fff" /><circle cx="15" cy="14.500" r="1.400" fill="#222" /><path d="M13 18l2-1.500 3 4 2 5M15 17l-2 4-2 4.500M14.500 21l2.500 4.500" fill="none" stroke="#222" strokeWidth="1.500" /><path d="M18 26l2.500-2.500L23 26z" fill="#222" /></>),
  pictures: (<><Bg />{[[1, 1], [16, 6], [5, 15]].map(([x, y]) => <g key={x} transform={`translate(${x} ${y})`}><rect x=".6" y=".6" width="15" height="15" fill="#fff" stroke="#2b86c2" strokeWidth="1.200" /><rect x="2.500" y="2.500" width="11" height="11" fill="#b6dff6" /><path d="M2.500 10l5-3 6 4v2.500h-11z" fill="#7fbf3a" /><circle cx="5" cy="5" r="1.400" fill="#f9a833" /><circle cx="10.500" cy="6" r="2.400" fill="#2f8a3a" /><path d="M10.500 8v3" stroke="#6b3f12" /></g>)}</>),
  backlog: (<><Bg /><path d="M6.500 1h16l6 5.500V30h-22z" fill="#f4f4f4" stroke="#9a9a9a" /><path d="M22.500 1v5.500h6" fill="#ddd" stroke="#9a9a9a" /><rect x="9" y="3.500" width="12" height="4" fill="#fbd38c" stroke="#e07b1a" strokeWidth="1.400" /><path d="M9 11h16M9 14h16M9 17h16M14 20h11M14 23h11M9 27h16" stroke="#a9a9a9" strokeDasharray="3 .7" /><path d="M1 21l7-6v3.500h8v5H8V27z" fill="#7cc4f2" stroke="#1f6cae" /></>),
  setDb: (<g><GreySheet x={0} y={2} w={21} h={20} /><rect x="7" y="8" width="24" height="23" fill="#f3f3f3" /><GreySheet x={8} y={9} w={20} h={18} /><rect x="11" y="22" width="21" height="10" fill="#f3f3f3" /><g fill="none" stroke={B} strokeWidth="2.300"><rect x="11.500" y="24.500" width="10" height="6" rx="3" transform="rotate(-8 16 27)" /><rect x="19.500" y="23.500" width="10" height="6" rx="3" transform="rotate(-8 24 27)" /></g></g>),
  setClient: (<g><rect x="3" y="9" width="14" height="10" fill="#fff" stroke={G} strokeWidth="1.800" /><path d="M10 19v3M6 23h8" stroke={G} strokeWidth="2" /><rect x="19.500" y="2.500" width="10" height="22" fill="#fff" stroke={G} strokeWidth="1.200" /><path d="M21.500 6h6M21.500 9h6M21.500 12h6M22 19h3" stroke={G} /><path d="M10 26v3h15v-6" fill="none" stroke={GR} strokeWidth="1.500" /><path d="M21.500 25l3.500-3.500 3.500 3.500" fill="none" stroke={GR} strokeWidth="1.500" /></g>),
  errorLog: (<><Bg /><path d="M2 .8h16l7 7V29H2z" fill="#d3ebf8" stroke="#2b86c2" strokeWidth="1.400" /><path d="M18 .8v7h7z" fill="#fff" stroke="#2b86c2" /><Warn x={16} y={18} /></>),
  master: (<><Bg /><rect x="14" y="1" width="15" height="28" rx="1" fill="#c6d6e4" stroke="#5d7d93" /><path d="M16 5h11M16 9h11" stroke="#8aa4b9" strokeWidth="1.500" /><g transform="translate(0 6) scale(.76)"><Monitor /></g><Pencil x={11} y={10} /></>),
  numbers: (<><Bg /><rect x="1.500" y="5.500" width="29" height="21" fill="#f1f4f6" stroke="#768694" strokeWidth="1.200" /><rect x="20" y="6" width="10" height="20" fill="#d7e1ea" stroke="#768694" /><path d="M20 16h10" stroke="#768694" /><path d="M22.500 13l2.500-3.500 2.500 3.500zM22.500 19l2.500 3.500 2.500-3.500z" fill="#1c3e5e" /><text x="10.700" y="21" fontSize="14" fontWeight="700" textAnchor="middle" fontFamily="Liberation Serif, serif" fill="#123c5f">10</text></>),
  lock: (<><path d="M9 14V9q0-6.500 7-6.500T23 9v5" fill="none" stroke={Y} strokeWidth="3" /><rect x="5" y="13" width="22" height="17" rx="1" fill={Y} /><circle cx="16" cy="19.500" r="2.500" fill="#fff" /><path d="M16 20v6" stroke="#fff" strokeWidth="2" /></>),
  secDb: (<><Person x={14} y={1} c={GR} s={1.15} /><Person x={0} y={6} c="#f3f3f3" s={1.5} /><Person x={1} y={6.500} c={B} s={1.400} /><Key x={16} y={16.500} /></>),
  maint: (<><Bg /><Monitor /><Pencil x={11} y={10} /></>),
  mouseL: (<><Bg /><Mouse /></>),
  mouseR: (<><Bg /><Mouse right /></>),
  profile: <Profile />,
  archive: (<g><rect x="2.500" y="3.500" width="27" height="25" fill="#fff" stroke={G} strokeWidth="1.200" /><path d="M5 12v8q4.500 3 9 0v-8z" fill={Y} /><ellipse cx="9.500" cy="12" rx="4.500" ry="2" fill="#f5dba8" /><path d="M16 8h11M16 11.500h11M16 15h11M16 18.500h11M16 22h11" stroke="#9a9a9a" /></g>),
  purge: (<g><path d="M4 15l9-3 8 9-4 6q-3 2-5 1-7-4-8-13z" fill={Y} /><path d="M13 9l4-3.500 9 9-4 4z" fill={G} stroke="#f3f3f3" /><path d="M20 10q4-5 8-7l2 2q-2 4-7 8z" fill={G} /></g>),
  rolls: (<g><rect x="2.500" y="3.500" width="27" height="24" fill="#fff" stroke="#9a9a9a" /><path d="M2.500 3.500h27v5h-27zM11 3.500v5M20 3.500v5" fill="#fff" stroke={R} strokeWidth="1.500" /><path d="M2 14h9M2 20h9M11 9v18" stroke="#9a9a9a" /><g transform="translate(11 12) scale(.65)"><rect x="-1" y="0" width="34" height="32" fill="#f3f3f3" /><Printer32 /></g></g>),
  excel: (<g><rect x="9" y="2" width="22" height="28" rx="1" fill="#21a366" /><path d="M20 2h10q1 0 1 1v6.500H20z" fill="#33c481" /><path d="M9 9.500h11V16H9z" fill="#107c41" /><path d="M20 9.500h11V16H20z" fill="#21a366" /><path d="M9 16h22v14H10q-1 0-1-1z" fill="#185c37" /><path d="M20 16h11v7H20z" fill="#107c41" /><rect y="8" width="16" height="17" rx="1" fill="#107c41" /><path d="M4.500 12l7 9M11.500 12l-7 9" stroke="#fff" strokeWidth="2.200" /></g>),
  home: (<><Bg /><rect x="1" y="1.500" width="30" height="28" fill="#e6f1f8" stroke="#2b86c2" strokeWidth="1.600" /><rect x="2" y="2" width="28" height="4" fill="#4aa9e6" /><path d="M4 26.500h24" stroke="#6aa03a" strokeWidth="2.400" /><path d="M8 17v9h17v-9l-8.500-7z" fill="#fbe2b4" stroke="#b57a2c" /><path d="M5.500 18L16.500 9 27 18" fill="none" stroke="#b36a2a" strokeWidth="2" /><rect x="8" y="9" width="3" height="5" fill="#e8a55a" /><rect x="14" y="19" width="5" height="7" fill="#cf8a30" stroke="#8a5a1c" strokeWidth=".6" /><rect x="15" y="13.500" width="3" height="3" fill="#58a9e8" /></>),
  book: (<><path d="M4 3q0-1 1-1h23v26H6q-2 0-2-2z" fill="#9668b5" /><path d="M8 2v24" stroke="#fff" strokeWidth="1.300" /><path d="M6 26.500h22v2H6z" fill="#fff" /><path d="M5 29h23" stroke="#9668b5" /><text x="18" y="22" fontSize="21" fontWeight="700" textAnchor="middle" fontFamily="Open Sans, sans-serif" fill="#fff">?</text></>),
  support: (<g><rect x="3.500" y="4.500" width="24" height="22" fill="#fff" stroke={G} /><rect x="3" y="4" width="25" height="5" fill={G} /><path d="M6 12h19M6 15.500h19M6 19h8M6 22.500h5" stroke="#aaa" strokeWidth="1.400" strokeDasharray="1.400 2" /><Person x={20.5} y={14} c={GR} s={1} /><Person x={9.5} y={16} c="#fff" s={1.13} /><Person x={10} y={17} c={B} s={1} /></g>),
  scroll: (<g><path d="M8 22V5q0-3 3-3h18q-3 0-3 3v20q0 3.500-3 3.500H11z" fill="#fff" stroke={G} strokeWidth="1.300" /><path d="M26 2h2q2 0 2 3v3.500h-4zM2 22h17v3q0 3 3 4H6q-4 0-4-4z" fill={G} /></g>),
  switch: (<g><path d="M3.500 22V2.500h9l5 5V14" fill="#fff" stroke={G} strokeWidth="1.200" /><path d="M6 7h5M6 10.500h9M6 14h7M6 17.500h7" stroke="#9a9a9a" /><path d="M15.500 11.500h10l5 5V31h-15z" fill="#fff" stroke={G} strokeWidth="1.200" /><path d="M25.500 11.500v5h5" fill="none" stroke={G} /><path d="M18 17h4M18 20.500h10M18 24h10M18 27.500h4" stroke={R} strokeWidth="1.300" /><path d="M19 5l6-5v3q7 .5 8 6h-2q-2-2.500-6-2.500V10zM13 27l-6-4.500V26q-4-.5-5-3H0q1 7 7 7v2.500z" fill={B} /></g>),
  labels: (<g fill="#fff" strokeWidth="1.400"><rect x="5" y="2.500" width="22" height="27" stroke={G} />{[7, 14, 21].map((y) => <path key={y} d={`M8 ${y - 0.5}h7v5H8zM17.500 ${y - 0.5}h7v5h-7z`} stroke={B} />)}</g>),
};

/* ---------- 16 px icons ---------- */
const Glass16 = () => (
  <g><circle cx="10" cy="5.500" r="4" fill="#fff" stroke={B} strokeWidth="1.700" /><path d="M7.200 8.300L2 13.500" stroke={B} strokeWidth="2.400" /></g>
);
const Print16 = () => (
  <g><path d="M0 5h16v6.500H0z" fill="#777" /><rect x="4.500" y=".6" width="7.500" height="5" fill="#fff" stroke="#777" strokeWidth="1.200" /><path d="M4 7.500h8.500" stroke="#f3f3f3" /><rect x="4.500" y="9.500" width="7.500" height="5" fill="#fff" stroke="#777" strokeWidth="1.200" /></g>
);
const Report16 = () => (
  <g><rect x="3.500" y="1.500" width="11" height="13" fill="#fff" stroke={G} /><path d="M1.500 3h3M1.500 6h3M1.500 9h3M1.500 12h3" stroke={G} /><rect x="6" y="3.500" width="7" height="2" fill={GR} /><path d="M6 8.500h3M10 8.500h3M6 11h3M10 11h3" stroke={G} /></g>
);
const DocCheck16 = () => (
  <g><path d="M3 1h7l3.500 3.500V15H3z" fill="#fff" stroke={G} /><path d="M9.500 1v3.500h4" fill="none" stroke={G} /><path d="M5 9l2.500 3L12 6.500" fill="none" stroke={B} strokeWidth="1.700" /></g>
);
const X16 = () => (
  <path d="M2 1q5 4 12.500 13M14.500 2Q7 6 1.500 14" fill="none" stroke="#5f5f5f" strokeWidth="2" strokeLinecap="round" />
);

const small: Record<string, ReactNode> = {
  none: null,
  plus: <path d="M3 8h9.500M7.700 3.200v9.500" stroke={B} strokeWidth="3.200" />,
  print: <Print16 />,
  search: <Glass16 />,
  register: (<g><rect x=".5" y=".5" width="15" height="15" fill="#fff" stroke={G} /><path d="M2 3h6M2 5.500h6M10 4h4M12 2v4" stroke={G} /><path d="M1 8.500q4 0 5 2t4 2.500v2.500M4 9v6.500M7 11v4.500M1 12.500h9" stroke={G} fill="none" /><path d="M12.500 3v4M12.500 9v5M11 5l1.500-1.500L14 5M11 12l1.500 2 1.500-2" stroke={B} fill="none" strokeWidth="1.200" /></g>),
  handwrite: (<g><path d="M8 2.500h7v8H9L5 14v-3.500H3" fill="#fff" stroke={G} /><path d="M1 11.500L9 2" stroke={B} strokeWidth="3" /><path d="M8 1l2.500 2.500" stroke={G} /></g>),
  docCheck: <DocCheck16 />,
  dollarQ: (<text x="8" y="13.500" fontSize="14" textAnchor="middle" fontFamily="Open Sans, sans-serif" letterSpacing="-.3" fill="#6f6f6f">"$"</text>),
  terms: (<g><rect x=".5" y="1" width="12" height="12" fill="#fff" stroke={G} /><rect y=".5" width="13" height="3" fill={G} /><path d="M2 6h3M7 6h2M2 9h3M7 9h2M2 11.500h3" stroke={G} /><rect x="3.500" y="6" width="3" height="3" fill="#fff" stroke={O} strokeWidth="1.200" /><circle cx="12" cy="4" r="3.400" fill="#fff" stroke={B} /><path d="M12 2v2h1.500" stroke={B} fill="none" /><path d="M10 14.500q5 1 5-4M10 10.500h4M10.500 10v3" stroke={O} strokeWidth="1.300" fill="none" /></g>),
  lock: (<g><path d="M4.500 7V4q0-3 3-3t3 3v3" fill="none" stroke={Y} strokeWidth="1.800" /><rect x="2" y="6" width="11" height="9" rx=".7" fill={Y} /><path d="M7.500 8.500v3.500" stroke="#fff" strokeWidth="2" /></g>),
  table: (<g><rect x=".5" y=".5" width="15" height="14.500" fill="#fff" stroke={G} /><rect width="16" height="4" fill={B} /><path d="M0 7.500h16M0 11.500h16M5.500 4v11M10.500 4v11" stroke={G} /></g>),
  tableGrey: (<g><rect x="1.500" y="2.500" width="12" height="10.500" fill="#fff" stroke={G} /><rect x="1" y="2" width="13" height="3" fill={G} /><path d="M1 7.500h13M1 10h13M5 5v8M9.500 5v8" stroke={G} /></g>),
  summary: (<g><rect x="1.500" y="1" width="13" height="14" fill="#fff" stroke={G} /><rect x="1" y=".5" width="14" height="3" fill={B} /><rect x="3.500" y="5.500" width="2.500" height="2.500" fill={B} /><rect x="3.500" y="10.500" width="2.500" height="2.500" fill="none" stroke={G} strokeWidth=".8" /><path d="M7.500 7h5M7.500 12h5" stroke={G} /></g>),
  stats: (<g><rect x=".5" y=".5" width="15" height="15" fill="#fff" stroke={G} /><path d="M2 3h4M10 3h4M2 6h3M11 6h3M2 10h3M11 10h3M2 13h4M10 13h4" stroke={G} strokeDasharray="1 .7" strokeWidth="1.500" /><path d="M5.500 5h5M8 3v4M4 8h8M5.500 11.500h5M8 9.500v4" stroke={B} strokeWidth="1.100" /></g>),
  gl: (<g><path d="M6 2.500h5l3.500 3.500v9H4V8" fill="#fff" stroke={G} /><path d="M10.500 2.500v4h4" fill="none" stroke={G} /><path d="M0 3.500h6M3 .5v6" stroke={GR} strokeWidth="1.700" /><path d="M6 11h6" stroke={R} strokeWidth="2.400" /></g>),
  proof: (<g><path d="M2 1h7l3 3v11H2z" fill="#fff" stroke={G} /><path d="M4 5h3M4 7.500h2M4 10h2" stroke={G} /><circle cx="10" cy="9" r="4" fill="#fff" stroke={G} /><path d="M8.500 7.500h3v3.500h-3zM8 9h3" fill="none" stroke={O} /></g>),
  update: (<g><rect x=".5" y="1" width="15" height="11" fill="#fff" stroke={G} /><rect y=".5" width="16" height="3" fill={B} /><path d="M2 6h5M2 8.500h4" stroke={G} /><path d="M7 5l8 10" stroke={G} strokeWidth="2" /><path d="M6 12l3-2M8 15l2-3M12 9l2-3" stroke={O} strokeWidth="1.400" /></g>),
  reversal: (<g stroke={B} strokeWidth="1.400" fill="none"><path d="M4 4.500H8M5.500 1.500l-3.500 3 3.500 3M10 4.500h2M13.500 4.500H15M12 11H8M10.500 8l3.500 3-3.500 3M6 11H4M2.500 11H1" /></g>),
  x: <X16 />,
  ack: (<g><circle cx="4" cy="4" r="3.200" fill="#fff" stroke={G} strokeWidth="1.300" /><path d="M2.500 7.500L4 10" stroke={G} strokeWidth="1.300" /><path d="M6 6l7-4 2 4-3 4-7 4H2V9z" fill={Y} /><path d="M5 10l8-5" stroke="#fff" /><path d="M9 13h6M11.500 10L8.500 13l3 3" stroke="#8d5cb0" strokeWidth="2" fill="none" /></g>),
  shiplist: (<g><path d="M1 13V1h7l3 3" fill="#fff" stroke={G} /><path d="M3 3v8M5 5h3" stroke={B} strokeWidth="1.200" /><rect x="5" y="8" width="11" height="5" fill="#777" /><rect x="7.500" y="5.500" width="6" height="3" fill="#fff" stroke="#777" /><rect x="7.500" y="11.500" width="6" height="4" fill="#fff" stroke="#777" /></g>),
  check: <path d="M1.500 7.500l4.500 5L14 2" fill="none" stroke={GR} strokeWidth="2.600" />,
  gen: (<g><path d="M3.500 1h10v9M3.500 1v11" fill="#fff" stroke={G} /><path d="M1.500 2.500h3M1.500 5.500h3M1.500 8.500h3" stroke={G} /><rect x="6" y="3" width="6" height="2" fill={GR} /><path d="M6 7l8 8" stroke={G} strokeWidth="2" /><path d="M5 14l3-3M8.500 15.500l1.500-2.500M12 9l1.500-2" stroke={O} strokeWidth="1.300" /></g>),
  mail: (<g><rect x="1.500" y="3.500" width="13" height="9.500" fill="#fff" stroke={G} /><path d="M3.500 8.500h4M3.500 10.500h6" stroke={G} /><rect x="11" y="5" width="2" height="2.500" fill={B} /></g>),
  fax: (<g><Print16 /><path d="M13 3q3.500 1 3.500 5T13 13" fill="none" stroke="#f3f3f3" strokeWidth="3" /><path d="M12.500 3.500q3 1 3 4.500t-3 4.500" fill="none" stroke="#777" strokeWidth="1.700" /></g>),
  report: <Report16 />,
  copy: (<g><path d="M1 1h5l2 2v8H1z" fill="#fff" stroke={G} /><path d="M6.500 4.500h5L15 8v7H6.500z" fill="#fff" stroke={G} /><path d="M2.500 4h3M2.500 6.500h3M8 9h5M8 11.500h5" stroke={B} strokeWidth="1.200" /></g>),
  convert: (<g><rect x=".5" y=".5" width="12" height="9" fill="#fff" stroke={G} /><rect width="13" height="3" fill={G} /><path d="M0 6h12M4 3v7M8.500 3v7" stroke={G} /><path d="M8 7.500h4.500L15.500 10v5.500H8z" fill="#fff" stroke={G} /><path d="M10 12.500h4" stroke={G} strokeWidth="1.500" strokeDasharray="1 1" /><path d="M1 10q1 4 5 3.500M4 11l3 2.500L4 16" fill="none" stroke={B} strokeWidth="1.600" /></g>),
  follow: (<g><path d="M1 1h5v2M1 1v9h3" fill="#fff" stroke={G} /><rect x="7" y="5" width="8.500" height="10.500" fill="#fff" stroke={Y} strokeWidth="1.500" /><path d="M4 3h3v10M9.500 5V3" fill="none" stroke={G} /><path d="M13 0v5M11 2h4" stroke={B} strokeWidth="1.300" /><path d="M9 10l2 2.500 3-4" stroke={R} strokeWidth="1.600" fill="none" /></g>),
  dots: (<g><circle cx="4.500" cy="3" r="1.700" fill={Y} /><circle cx="10.500" cy="3" r="1.700" fill={GR} /><circle cx="2.300" cy="8.500" r="1.900" fill={R} /><circle cx="13.500" cy="8.500" r="1.900" fill={B} /><circle cx="8" cy="12.500" r="2" fill={O} /></g>),
  truck: (<g><rect width="16" height="16" fill="#fff" /><path d="M.5 4h9.500v8H.5z" fill="#b5b5b5" stroke="#888" strokeWidth=".7" /><path d="M10 6.500h4l2 3v3h-6z" fill="#5d5d5d" /><path d="M11.500 7.500h2l1 1.500h-3z" fill="#ddd" /><circle cx="4" cy="13" r="1.800" fill="#333" /><circle cx="8" cy="13" r="1.800" fill="#333" /><circle cx="13" cy="13" r="1.800" fill="#333" /></g>),
  rma: (<g><rect x="1" y="1" width="14" height="14" rx="1" fill="#d98f42" stroke="#b5752a" /><rect x="3" y="4" width="10" height="9" fill="#f1a94f" /><path d="M6 5h4v3.500h2.500L8 13 3.500 8.500H6z" fill="#8ac43a" stroke="#5c8a1c" strokeWidth=".6" /></g>),
  compass: (<g><rect width="16" height="16" fill="#fff" /><circle cx="8" cy="8" r="7" fill="#fbb83a" stroke="#d98c1a" /><circle cx="8" cy="8" r="4.500" fill="#fdd988" /><path d="M4 3.500L9.500 7 12 12.500 6.500 9z" fill="#c8401f" /></g>),
  loclot: (<g fill="#fff" stroke={G}><rect x="7.500" y="1.500" width="8" height="12.500" /><path d="M9 4h5M9 6.500h5M9 9h5M9 11.500h5" stroke={B} /><rect x=".5" y="4.500" width="8" height="7" /><path d="M2.500 8h4M4.500 6v4" stroke={G} strokeWidth="1.200" /></g>),
  maint: (<g><path d="M1 5h5v10H1z" fill={Y} /><path d="M3.500 0v5M1.500 2.500h4M2 1l3 3M5 1L2 4" stroke={B} /><path d="M7.500 5h2v4h-2zM7 10h3v5H7z" fill={Y} /><path d="M11 5v3l2 2v5h1.500v-5l2-2V5l-1.500 2h-2z" fill={B} /></g>),
  dept: (<g fill="#fff" stroke={B} strokeWidth="1.200"><path d="M8 4v8M3 7.500V6.500h10v1" fill="none" stroke={G} /><rect x="5.500" y=".6" width="5" height="3.500" /><rect x=".6" y="7" width="5" height="3" /><rect x="10" y="7" width="5" height="3" /><rect x=".6" y="12" width="5" height="3" /><rect x="10" y="12" width="5" height="3" /></g>),
  emp: (<g><circle cx="6" cy="3.500" r="3" fill={G} /><path d="M0 14v-3q0-3 3-3.500L6 10l3-2.500q2 .5 2.500 2.500v4z" fill={G} /><path d="M9 12.500h7M12.500 9v7" stroke="#f3f3f3" strokeWidth="4" /><path d="M9 12.500h6.500M12.500 9.200v6.500" stroke={GR} strokeWidth="1.900" /></g>),
  req: (<g><rect width="16" height="16" fill="#fff" /><rect x="3" y="1" width="10" height="9" rx="1" fill="#c77f2e" /><path d="M1 10h14v5H1z" fill="#e6a95c" stroke="#b5752a" /><path d="M5 3h6v5H5z" fill="#e0a050" /></g>),
};
["C", "P", "R", "S", "T", "F"].forEach((c) => {
  small[c] = (
    <text x="7.500" y="13" fontSize="15" fontWeight="700" textAnchor="middle" fontFamily="Liberation Sans, sans-serif" fill="#000">{c}</text>
  );
});

/* ---------- ribbon building blocks ---------- */
const Chevron = ({ c = "" }: { c?: string }) => (
  <svg width="7" height="5" viewBox="0 0 7 5" className={`ml-[3px] inline-block shrink-0 ${c}`}>
    <path d="M1 1l2.500 2.300L6 1" fill="none" stroke="#333" strokeWidth="1.200" />
  </svg>
);

type BigProps = { w: string; i?: string; digit?: string; a: string; b?: string; menu?: boolean };
const Big = ({ w, i, digit, a, b, menu }: BigProps) => (
  <div className={`flex shrink-0 flex-col items-center pt-0.5 ${w}`}>
    {digit ? (
      <span className="h-8 scale-x-90 pl-px text-[30px] leading-[32px] font-bold text-black [font-family:'Liberation_Sans',sans-serif]">{digit}</span>
    ) : (
      <svg width="32" height="32" viewBox="0 0 32 32" className="shrink-0 overflow-visible">{big[i as string]}</svg>
    )}
    <span className="mt-[3px] h-4 leading-4 whitespace-nowrap">{a}</span>
    {(b || menu) && (
      <span className="flex h-4 items-center leading-4 whitespace-nowrap">
        {b}
        {menu && <Chevron c={b ? "mb-px" : "mr-[3px] mb-[3px]"} />}
      </span>
    )}
  </div>
);

const Row = ({ i, t, menu }: { i: string; t: string; menu?: boolean }) => (
  <div className="flex h-[23px] items-center leading-[23px] whitespace-nowrap">
    <svg width="16" height="16" viewBox="0 0 16 16" className="mt-[3px] mr-[3px] shrink-0 self-start overflow-visible">{small[i]}</svg>
    {t}
    {menu && <Chevron />}
  </div>
);

const SelectRow = () => (
  <div className="-ml-[3px] flex h-[23px] items-center leading-[23px] whitespace-nowrap">
    <span className="w-9">Select</span>
    <div className="flex h-[23px] w-[95px] shrink-0 border border-[#8c8c8c] bg-white pl-[3px] leading-[21px]">
      <span className="flex-1">Current</span>
      <span className="flex w-[14px] items-center justify-center border-l border-[#8c8c8c]">
        <svg width="5" height="3" viewBox="0 0 5 3"><path d="M0 0h5L2.500 3z" fill="#666" /></svg>
      </span>
    </div>
  </div>
);

const Col = ({ c = "", children }: { c?: string; children: ReactNode }) => (
  <div className={`-mt-px shrink-0 ${c}`}>{children}</div>
);

const Sep = ({ c = "" }: { c?: string }) => (
  <div className={`mt-1.5 h-[55px] w-px shrink-0 bg-[#d0d0d0] ${c}`} />
);

const Group = ({ w, label, shift = "", children, launcher }: { w: string; label: string; shift?: string; children: ReactNode; launcher?: boolean }) => (
  <section className={`flex h-[84px] shrink-0 flex-col border-r border-[#868686] ${w}`}>
    <div className="flex h-[72px] shrink-0">{children}</div>
    <div className={`relative flex h-[15px] shrink-0 justify-center text-[11.500px] leading-[15px] whitespace-nowrap ${label.length > 16 ? "tracking-[-0.2px]" : "tracking-[-0.1px]"} ${shift}`}>
      {label}
      {launcher && (
        <svg width="9" height="9" viewBox="0 0 9 9" className="absolute top-1 right-[3px]">
          <path d="M1 8V1h7M3.500 3.500L7.500 7.500M8 4v4H4" fill="none" stroke="#444" />
        </svg>
      )}
    </div>
  </section>
);

const tabs: [string, string][] = [
  ["Accounting", "w-[87px] mr-[2px]"],
  ["Cost Accounting", "w-[114px] mr-[2px]"],
  ["Customer Service", "w-[117px] mr-[2px]"],
  ["Financial", "w-[72px] mr-[2px]"],
  ["Inventory", "w-[75px] mr-[2px]"],
  ["Manufacturing", "w-[104px] mr-[2px]"],
  ["MRP II", "w-[59px] mr-[2px]"],
  ["Production", "w-[84px] mr-[2px]"],
  ["Sales Analysis", "w-[97px] mr-[2px]"],
  ["Control", "w-[65px] mr-[2px]"],
  ["User Menu", "w-[82px] mr-[2px]"],
  ["Help", "w-[50px] mr-[2px]"],
  ["System", "w-[63px] mr-[2px]"],
  ["Phoenix", "w-[67px]"],
];

type RibbonProps = { active: string; pad?: string; h: string; tabH?: string; children?: ReactNode };
const Ribbon = ({ active, pad = "", h, tabH = "h-[29px]", children }: RibbonProps) => (
  <div className={`overflow-hidden ${h}`}>
    <nav className={`flex items-stretch bg-[#a4373a] text-white ${tabH} ${pad}`}>
      <span className="mr-[9px] flex w-[46px] items-center justify-center pb-px">File</span>
      {tabs.map(([name, w]) => (
        <span
          key={name}
          className={`flex items-center justify-center pr-[1.500px] pb-px tracking-[-0.15px] whitespace-nowrap ${w} ${name === active ? "bg-[#f3f3f3] text-[#a4373a]" : ""}`}
        >
          {name}
        </span>
      ))}
    </nav>
    <div className="flex h-[93px] border-b border-[#d2d2d2] pt-1">{children}</div>
  </div>
);

export default function App() {
  return (
    <div className="h-[1608px] w-[1837px] overflow-hidden bg-[#f3f3f3] text-[12px] tracking-[-0.2px] text-[#2b2b2b] [font-family:'Open_Sans','Noto_Sans',sans-serif]">
      <header className="flex h-8 items-center bg-[#a4373a] leading-8 whitespace-pre text-white">
        <svg width="7" height="7" viewBox="0 0 7 7" className="mr-[995px] ml-5">
          <path d="M1 .7h5.500" stroke="#fff" strokeWidth="1.200" /><path d="M1 3.200h5.500L3.700 6z" fill="#fff" />
        </svg>
        <span className="w-[62px]">MRP Plus</span>
        <span className="w-[88px] tracking-[-0.550px]">Release: 17.xx</span>
        <span className="tracking-[-0.350px]">Server Path: N:\Mrpplus_be.mdb</span>
      </header>

      <Ribbon active="Accounting" h="h-[123px]" tabH="h-[30px]">
        <Group w="w-[163px]" label="A/P Entry" shift="pr-1.5">
          <Big w="ml-[1.5px] w-[51px]" i="notepad" a="P/O" b="Payables" />
          <Big w="w-[51px]" i="envelope" a="Misc" b="Payables" />
          <Big w="w-[51px]" i="docCheck" a="Late" b="Payables" />
        </Group>
        <Group w="w-[286px]" label="A/P Reporting">
          <Col c="ml-[11px] w-[132px]"><SelectRow /><Row i="print" t="Ageing" /><Row i="print" t="Clearing" /></Col>
          <Sep />
          <Big w="w-[57px]" i="inquiry" a="Inquiries" menu />
          <Col><Row i="plus" t="Reports" menu /></Col>
        </Group>
        <Group w="w-[399px]" label="A/P Check Processing">
          <Big w="ml-1 w-[61px]" i="dollar" a="Payment" b="Selection" />
          <Sep />
          <Col c="ml-[7px] w-[72px]"><Row i="search" t="Preview" /><Row i="print" t="Print" /><Row i="register" t="Register" /></Col>
          <Sep />
          <Col c="ml-[7px] w-[96px]"><Row i="register" t="ACH" /><Row i="register" t="ACH Checks" /></Col>
          <Sep />
          <Col c="ml-[7px]"><Row i="handwrite" t="Handwrite" /><Row i="docCheck" t="Check Reconcilation" /><Row i="plus" t="More" menu /></Col>
        </Group>
        <Group w="w-[162px]" label="A/R Entry">
          <Big w="ml-[8px] w-[66px]" i="cashPlus" a="Cash" b="Application" />
          <Big w="w-[82px]" i="tableCoins" a="Miscellaneous" b="Cash" />
        </Group>
        <Group w="w-[384px]" label="A/R Reporting">
          <Big w="ml-[3px] w-[87px]" i="journal" a="Cash Receipts" b="Journal" />
          <Sep />
          <Col c="ml-[7px] w-[132px]"><Row i="print" t="Statements" /><SelectRow /><Row i="print" t="Ageing" /></Col>
          <Sep />
          <Col c="ml-[7px]"><Row i="search" t="History Inquiry" /><Row i="search" t="Payment Distribution" /><Row i="plus" t="More" menu /></Col>
        </Group>
        <Group w="w-[202px]" label="Financial Codes">
          <Col c="ml-[11px] w-[80px]"><Row i="dollarQ" t="Bank" /><Row i="register" t="Exchange" /></Col>
          <Sep />
          <Col c="ml-[7px]"><Row i="terms" t="Terms" /><Row i="lock" t="Credit Rating" /></Col>
        </Group>
      </Ribbon>

      <Ribbon active="Cost Accounting" pad="pl-1" h="h-[122px]">
        <Group w="w-[188px]" label="Roll-Ups" shift="pr-1">
          <Big w="ml-[3px] w-[54px]" i="org" a="Bottom-" b="Up" />
          <Big w="w-[75px]" i="orgPlus" a="Cummulative" />
          <Big w="w-[48px]" i="routing" a="Routing" />
        </Group>
        <Group w="w-[220px]" label="Accounting">
          <Big w="ml-[9px] w-[40px]" i="parts" a="Parts" />
          <Big w="w-[43px]" i="inquiry" a="Inquiry" />
          <Sep c="ml-1" />
          <Col c="ml-[7px]"><Row i="table" t="Routing" /><Row i="print" t="Inventory Costs" /><Row i="plus" t="More" menu /></Col>
        </Group>
        <Group w="w-[196px]" label="Work Orders">
          <Big w="ml-[11px] w-[36px]" i="door" a="Close" />
          <Big w="w-[91px]" i="sigma" a="Summarization" />
          <Sep c="ml-px" />
          <Big w="ml-px w-[52px]" i="tools" a="Utilities" menu />
        </Group>
        <Group w="w-[393px]" label="Work Order Reporting">
          <Col c="ml-[11px] w-[121px]"><Row i="summary" t="Summary Inquiry" /><Row i="dollarQ" t="Costs" /><Row i="stats" t="Stats" /></Col>
          <Sep />
          <Col c="ml-[7px] w-[131px]"><Row i="print" t="Clearing" /><SelectRow /><Row i="print" t="Value" /></Col>
          <Col><Row i="gl" t="G/L Balancing" /><Row i="docCheck" t="Audit" /><Row i="docCheck" t="Monthly Closing" /></Col>
        </Group>
        <Group w="w-[401px]" label="Time Cards">
          <Big w="ml-1 w-[49px]" i="clockPlus" a="Entry" />
          <Sep c="ml-px" />
          <Col c="ml-[7px] w-[73px]"><Row i="proof" t="Proof" /><Row i="update" t="Update" /><Row i="reversal" t="Reversal" /></Col>
          <Sep />
          <Big w="w-[50px]" i="inquiry" a="Inquiry" menu />
          <Sep />
          <Col c="ml-[7px] w-[129px]"><Row i="print" t="Posted Report" /><Row i="print" t="Indirect Labor Sum" /><Row i="print" t="Weekly Time" /></Col>
          <Col><Row i="tableGrey" t="Codes" menu /></Col>
        </Group>
      </Ribbon>

      <Ribbon active="Customer Service" pad="pl-1" h="h-[122px]">
        <Group w="w-[329px]" label="Customers" shift="pr-[18px]" launcher>
          <Big w="ml-[5px] w-[52px]" i="people" a="Add/" b="Maintain" />
          <Big w="w-[43px]" i="truck" a="Ship" b="To" />
          <Big w="w-[42px]" i="credit" a="Credit" menu />
          <Col c="ml-[3px] w-[117px]"><Row i="search" t="Inquiry" /><Row i="dollarQ" t="Price Quotations" /><Row i="print" t="Listings" menu /></Col>
          <Col><Row i="x" t="Delete" /></Col>
        </Group>
        <Group w="w-[245px]" label="Sales Orders">
          <Big w="ml-2.5 w-[38px]" i="note" a="Sales" />
          <Big w="w-[45px]" i="inquiry" a="Inquiry" />
          <Col c="ml-0.5"><Row i="ack" t="Acknowledgements" menu /><Row i="shiplist" t="Ship Lists" menu /><Row i="plus" t="More" menu /></Col>
        </Group>
        <Group w="w-[73px]" label="Notifications">
          <Big w="w-[71px]" i="news" a="Shipping" />
        </Group>
        <Group w="w-[372px]" label="Invoicing">
          <Big w="ml-[5px] w-[48px]" i="dollarWarn" a="Credit/" b="Debit" menu />
          <Col c="ml-0.5 w-[88px]"><Row i="check" t="Audit" /><Row i="gen" t="Generation" /><Row i="print" t="Print" /></Col>
          <Sep />
          <Col c="ml-[7px] w-[67px]"><Row i="mail" t="E-Mail" /><Row i="fax" t="Fax" /><Row i="print" t="Register" /></Col>
          <Big w="w-[65px]" i="stamp" a="Pre-" b="Invoicing" menu />
          <Col c="ml-1"><Row i="report" t="Reports" menu /><Row i="plus" t="More" menu /><Row i="print" t="Proforma" /></Col>
        </Group>
        <Group w="w-[197px]" label="Pricing">
          <Big w="ml-1.5 w-[61px]" i="globePerson" a="Parts" b="Marketing" />
          <Col c="ml-[3px]"><Row i="table" t="Price Matrix" /><Row i="copy" t="Price Matrix Copy" /><Row i="print" t="Reporting" menu /></Col>
        </Group>
        <Group w="w-[168px]" label="Quoting">
          <Big w="ml-2 w-[41px]" i="calculator" a="Entry" />
          <Col c="ml-1"><Row i="print" t="Print" /><Row i="convert" t="Convert To S/O" /><Row i="follow" t="Follow-Up" /></Col>
        </Group>
        <Group w="w-[58px]" label="Codes">
          <Big w="w-[58px]" i="codes" a="Codes" menu />
        </Group>
      </Ribbon>

      <Ribbon active="Inventory" pad="pl-1" h="h-[121px]">
        <Group w="w-[434px]" label="Stock Movement" shift="pr-1">
          <Big w="ml-[3px] w-[47px]" i="winArrow" a="1st" b="Issue" menu />
          <Big w="w-[54px]" i="tray" a="P/O" b="Receipts" menu />
          <Big w="w-[68px]" i="carton" a="Shipments" />
          <Big w="w-[54px]" i="boxArrow" a="Process" b="Shipments" />
          <Big w="w-[56px]" i="winPlus" a="WIP" b="Receipts" />
          <Big w="w-[46px]" i="transfers" a="Transfers" menu />
          <Col c="ml-1.5"><Row i="dots" t="Additional" menu /><Row i="report" t="Reports" menu /><Row i="plus" t="More" menu /></Col>
        </Group>
        <Group w="w-[138px]" label="Documents">
          <Col c="ml-[11px]"><Row i="truck" t="Delivery Tickets" menu /><Row i="rma" t="RMA (Returns)" /><Row i="print" t="RMA Print" /></Col>
        </Group>
        <Group w="w-[216px]" label="Warehouse">
          <Big w="ml-2 w-[41px]" i="gear" a="Parts" b="Store" />
          <Col c="ml-1"><Row i="compass" t="Locations" /><Row i="loclot" t="Loc/Lot Conversion" /><Row i="x" t="Remove Empty Loc/Lots" /></Col>
        </Group>
        <Group w="w-[179px]" label="Statistics">
          <Big w="ml-2 w-[65px]" i="calPlus" a="Month-End" b="Quantities" />
          <Big w="w-[44px]" i="pie" a="Usage" menu />
          <Big w="w-[52px]" i="printer" a="Inventory" b="Turns" />
        </Group>
        <Group w="w-[292px]" label="Inquiry / Lot Tracking">
          <Big w="ml-[9px] w-[39px]" i="inquiry" a="Parts" b="Inquiry" />
          <Big w="w-[68px]" i="multi" a="Multi-Level" b="Pegging" />
          <Big w="w-[40px]" i="lot" a="Lot" b="Tracker" />
          <Big w="w-[61px]" i="search" a="Advanced" b="Search" />
          <Col c="ml-0.5"><Row i="plus" t="More" menu /></Col>
        </Group>
        <Group w="w-[126px]" label="Accounting">
          <Big w="ml-[11px] w-[36px]" i="printerPhone" a="G/L" b="Value" />
          <Col c="ml-1.5"><Row i="plus" t="More" menu /></Col>
        </Group>
        <Group w="w-[141px]" label="Physical Inventory">
          <Big w="ml-2 w-[65px]" i="cycle" a="Cycle" b="Counting" menu />
          <Big w="w-[60px]" i="news" a="Full" b="Physical" menu />
        </Group>
        <Group w="w-[138px]" label="Utilities">
          <Col c="ml-[11px]"><Row i="none" t="IPL Clear/Reload" /><Row i="none" t="Rebuild Allocated" /></Col>
        </Group>
      </Ribbon>

      <Ribbon active="Manufacturing" pad="pl-px" h="h-[122px]">
        <Group w="w-[180px]" label="Vendors" shift="pr-1.5">
          <Big w="ml-[3px] w-[41px]" i="biz" a="Entry" />
          <Big w="w-[43px]" i="factory" a="Plant" b="Entry" />
          <Col c="ml-[3px]"><Row i="search" t="Inquiries" menu /><Row i="report" t="Reports" menu /><Row i="plus" t="More" menu /></Col>
        </Group>
        <Group w="w-[64px]" label="Analysis">
          <Big w="w-[63px]" i="material" a="Material" />
        </Group>
        <Group w="w-[387px]" label="Purchase Orders">
          <Big w="ml-2.5 w-[37px]" i="bizDoc" a="Entry" />
          <Big w="w-[47px]" i="wrenchBlue" a="P/O To" b="Start" />
          <Big w="w-[65px]" i="wrenchOrange" a="P/O To Start" b="OutPlant" />
          <Big w="w-[53px]" i="blanket" a="Blanket" b="Releases" />
          <Big w="w-[37px]" i="tickler" a="Tickler" />
          <Big w="w-[47px]" i="printerPhone" a="P/O" b="Print" menu />
          <Col c="ml-px"><Row i="search" t="Inquiries" menu /><Row i="report" t="Reports" menu /><Row i="plus" t="More" menu /></Col>
        </Group>
        <Group w="w-[340px]" label="Work Orders">
          <Big w="ml-2 w-[40px]" i="lego" a="Entry" />
          <Big w="w-[48px]" i="legoPencil" a="W/Os" b="To Start" />
          <Big w="w-[41px]" i="legoArrow" a="W/O" b="Release" />
          <Big w="w-[45px]" i="printerPhone" a="W/O" b="Print" menu />
          <Col c="ml-0.5 w-[105px]"><Row i="maint" t="Maintenance" menu /><Row i="search" t="Inquiries" menu /><Row i="report" t="Reports" menu /></Col>
          <Big w="w-[44px]" i="inquiry" a="Status" />
        </Group>
        <Group w="w-[189px]" label="Shop Scheduling">
          <Big w="ml-2 w-[50px]" i="capacity" a="Shop" b="Capacity" />
          <Big w="w-[44px]" i="mfg" a="MFG" b="Tickler" />
          <Col c="ml-0.5"><Row i="report" t="Reports" menu /><Row i="plus" t="More" menu /></Col>
        </Group>
        <Group w="w-[150px]" label="Time">
          <Big w="ml-[7px] w-[44px]" i="move" a="Move" />
          <Col c="ml-0.5"><Row i="dept" t="Department" /><Row i="emp" t="Employees" /></Col>
        </Group>
      </Ribbon>

      <Ribbon active="MRP II" pad="pl-[3px]" h="h-[122px]">
        <Group w="w-[287px]" label="Material Requirements" shift="pr-1.5">
          <Big w="ml-[5px] w-[62px]" i="generation" a="Generation" />
          <Big w="w-[48px]" i="netChange" a="Net" b="Change" />
          <Big w="w-[49px]" i="board" a="Manual" b="Planning" />
          <Col c="ml-[5px]"><Row i="req" t="Requirements" menu /><Row i="plus" t="More" menu /></Col>
        </Group>
        <Group w="w-[191px]" label="Forecasting">
          <Big w="ml-[7px] w-[54px]" i="keyM" a="Master" b="Schedule" />
          <Big w="w-[42px]" i="keyS" a="Sales" />
          <Col c="ml-[3px]"><Row i="report" t="Reports" menu /></Col>
        </Group>
        <Group w="w-[220px]" label="Planning">
          <Big w="ml-2 w-[40px]" i="plan" a="Plan" b="Maint" />
          <Big w="w-[72px]" i="component" a="Component" b="Allocation" />
          <Big w="w-[39px]" i="film" a="Rough" b="Cut" />
          <Big w="w-[54px]" i="simulate" a="Simulate" />
        </Group>
      </Ribbon>

      <Ribbon active="Production" pad="pl-px" h="h-[122px]">
        <Group w="w-[301px]" label="Parts" shift="pr-1.5">
          <Big w="ml-[3px] w-[41px]" i="partEntry" a="Entry" menu />
          <Big w="w-[49px]" i="bom" a="Bills Of" b="Material" />
          <Big w="w-[66px]" i="slb" a="Single Level" b="Bill" menu />
          <Big w="w-[66px]" i="mlb" a="Multi-Level" b="Bill" menu />
          <Col c="ml-[3px]"><Row i="plus" t="More" menu /></Col>
        </Group>
        <Group w="w-[261px]" label="Capacity">
          <Big w="ml-2 w-[44px]" i="worker" a="Work" b="Centers" />
          <Big w="w-[64px]" i="operations" a="Operations" />
          <Big w="w-[51px]" i="routings" a="Routings" />
          <Col c="ml-1"><Row i="search" t="Inquiries" menu /><Row i="report" t="Reports" menu /><Row i="plus" t="More" menu /></Col>
        </Group>
        <Group w="w-[122px]" label="Engineering Change">
          <Big w="ml-2.5 w-[36px]" i="folderGear" a="Entry" />
          <Big w="w-[71px]" i="roadwork" a="Disposition" />
        </Group>
      </Ribbon>

      <Ribbon active="Sales Analysis" pad="pl-1" h="h-[122px]">
        <Group w="w-[111px]" label="Product Family" shift="pr-1">
          <Big w="ml-1.5 w-[41px]" i="pictures" a="Entry" />
          <Col c="ml-1"><Row i="print" t="List" /><Row i="print" t="Sales" /></Col>
        </Group>
        <Group w="w-[131px]" label="Current Orders">
          <Big w="ml-[7px] w-[48px]" i="backlog" a="Backlog" />
          <Col c="ml-[3px]"><Row i="plus" t="More" menu /></Col>
        </Group>
        <Group w="w-[65px]" label="Misc Codes">
          <Big w="w-[64px]" i="printer" a="Sales" />
        </Group>
        <Group w="w-[114px]" label="Customers">
          <Big w="ml-2 w-[41px]" i="inquiry" a="Inquiry" />
          <Big w="w-[57px]" i="printerPhone" a="Summary" />
        </Group>
        <Group w="w-[58px]" label="Parts">
          <Big w="w-[57px]" i="inquiry" a="Last" b="Sales" />
        </Group>
        <Group w="w-[206px]" label="Sales History">
          <Col c="ml-[11px] w-[81px]"><Row i="C" t="Customer" /><Row i="P" t="Part" /><Row i="R" t="Rep" /></Col>
          <Col><Row i="S" t="State" /><Row i="T" t="Territory" /><Row i="F" t="Product Family" /></Col>
        </Group>
        <Group w="w-[71px]" label="Utilities">
          <Big w="w-[71px]" i="tools" a="Rebuild" b="S/A Table" />
        </Group>
      </Ribbon>

      <Ribbon active="Control" pad="pl-0.5" h="h-[118px]">
        <Group w="w-[95px]" label="Application Setup" shift="pr-1">
          <Big w="w-[90px]" i="setDb" a="Set Database" b="Location" />
        </Group>
        <Group w="w-[113px]" label="Client Setup">
          <Big w="ml-2 w-[54px]" i="setClient" a="Set Client" b="Location" />
          <Big w="w-[44px]" i="errorLog" a="Error" b="Log" />
        </Group>
        <Group w="w-[251px]" label="Admin">
          <Big w="ml-2 w-[44px]" i="master" a="Master" b="Control" />
          <Big w="w-[55px]" i="numbers" a="Next" b="Numbers" />
          <Big w="w-[46px]" i="lock" a="Security" />
          <Big w="w-[48px]" i="secDb" a="Security" b="DB" />
          <Big w="w-[41px]" i="secDb" a="Active" b="Users" />
        </Group>
        <Group w="w-[280px]" label="User Menus">
          <Big w="ml-[5px] w-[79px]" i="maint" a="Maintenance" />
          <Big w="w-[38px]" i="mouseL" a="Save" />
          <Big w="w-[47px]" i="mouseR" a="Restore" />
          <Big w="w-[40px]" i="profile" a="User" b="Fields" />
          <Big w="w-[63px]" i="profile" a="User Menu" b="Maint" />
        </Group>
        <Group w="w-[103px]" label="Table Maintenance">
          <Big w="ml-[7px] w-[45px]" i="archive" a="Archive" menu />
          <Big w="w-[44px]" i="purge" a="Purge" menu />
        </Group>
        <Group w="w-[58px]" label="Year-End">
          <Big w="w-[57px]" i="rolls" a="Rolls" menu />
        </Group>
        <Group w="w-[58px]" label="Export">
          <Big w="w-[58px]" i="excel" a="Excel" />
        </Group>
      </Ribbon>

      <Ribbon active="User Menu" pad="pl-0.5" h="h-[121px]">
        <Group w="w-[54px]" label="Legacy" shift="pr-1">
          <Big w="w-[50px]" i="home" a="Menu" />
        </Group>
        <Group w="w-[352px]" label="Menu">
          <Big w="ml-[7.500px] w-[56px]" digit="1" a="User" b="Menu 1" menu />
          <Big w="w-[56px]" digit="2" a="User" b="Menu 2" menu />
          <Big w="w-[56px]" digit="3" a="User" b="Menu 3" menu />
          <Big w="w-[56px]" digit="4" a="User" b="Menu 4" menu />
          <Big w="w-[56px]" digit="5" a="User" b="Menu 5" menu />
          <Big w="w-[56px]" digit="6" a="User" b="Menu 6" menu />
        </Group>
      </Ribbon>

      <Ribbon active="Help" pad="pl-[3px]" h="h-[120px]">
        <Group w="w-[153px]" label="Help" shift="pr-1">
          <Big w="ml-[5px] w-[42px]" i="book" a="Mrp" b="Plus" />
          <Big w="w-[46px]" i="support" a="Support" />
          <Sep c="ml-[5px]" />
          <Big w="w-[49px]" i="scroll" a="About" />
        </Group>
      </Ribbon>

      <Ribbon active="System" pad="pl-1" h="h-[119px]">
        <Group w="w-[56px]" label="Printer" shift="pr-1">
          <Big w="w-[54px]" i="printer" a="Printer" />
        </Group>
        <Group w="w-[137px]" label="Switch Company/Division">
          <Big w="w-[135px]" i="switch" a="Switch" />
        </Group>
        <Group w="w-[74px]" label="Labels">
          <Big w="w-[74px]" i="labels" a="Free Form" b="labels" />
        </Group>
      </Ribbon>

      <Ribbon active="Phoenix" pad="pl-1" h="h-[122px]" />
    </div>
  );
}
